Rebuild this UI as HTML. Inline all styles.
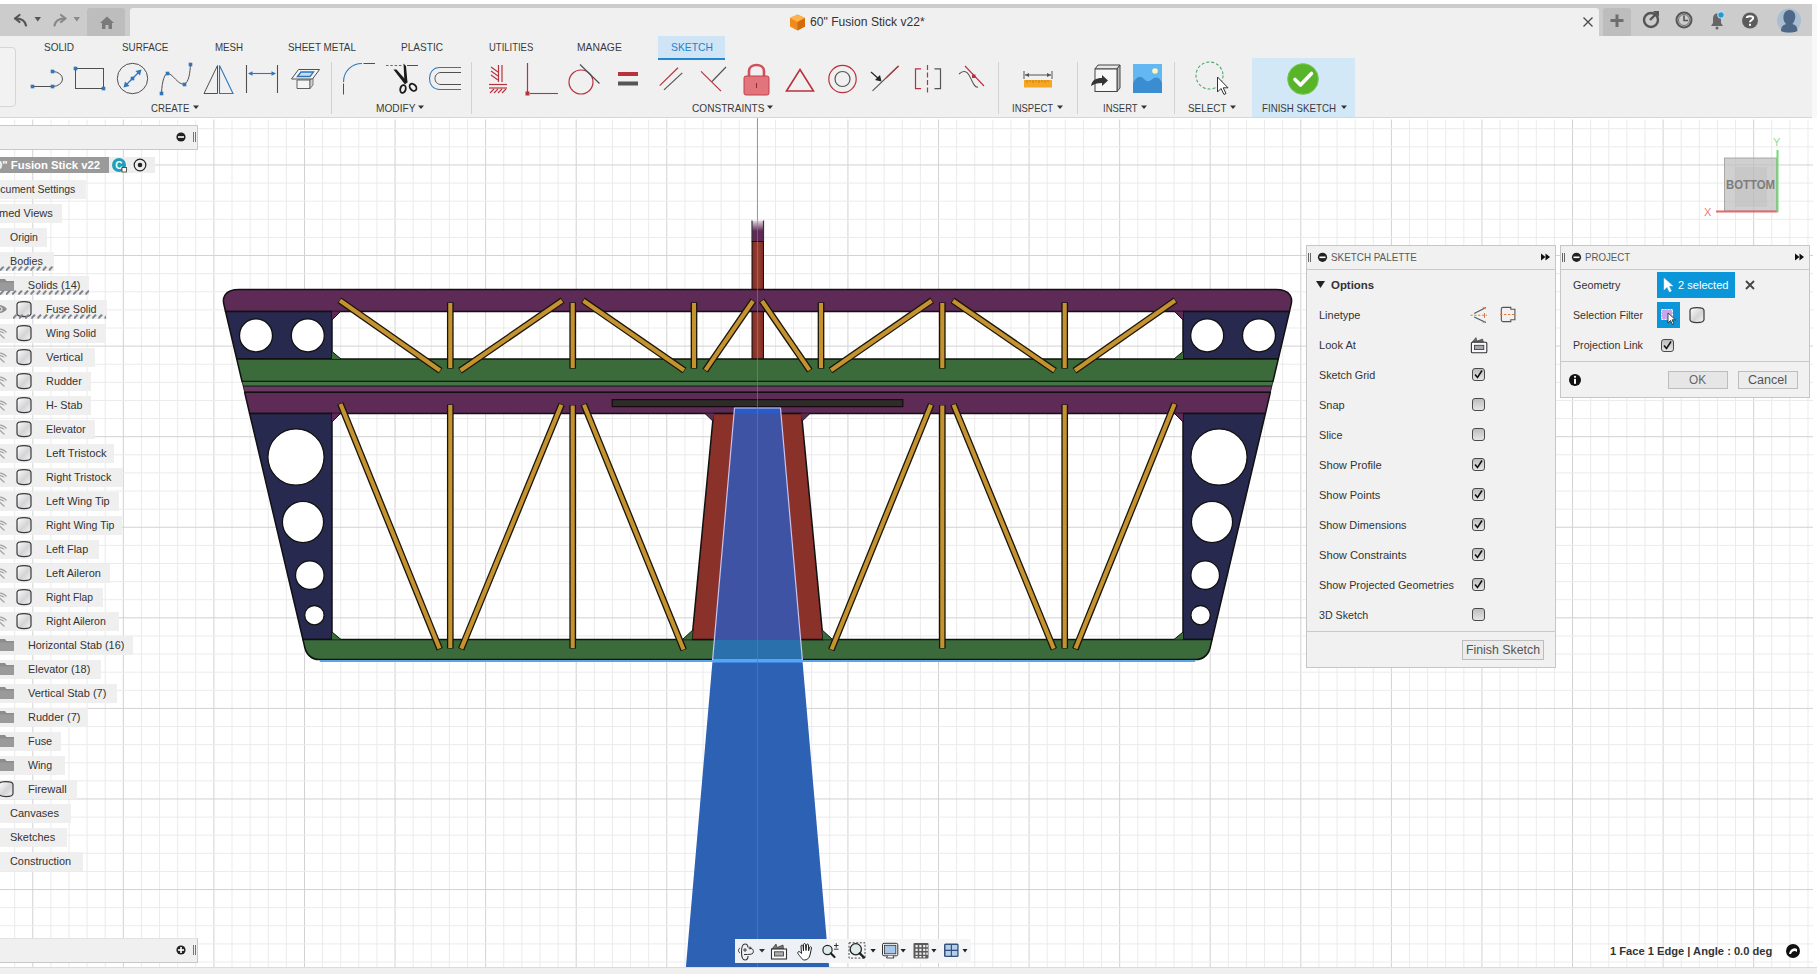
<!DOCTYPE html><html><head><meta charset="utf-8"><style>
*{box-sizing:border-box;margin:0;padding:0}
html,body{width:1817px;height:974px;overflow:hidden;background:#fff;font-family:"Liberation Sans",sans-serif;}
.abs{position:absolute}
.ft{position:absolute;white-space:nowrap;transform-origin:0 0}
.t{position:absolute;white-space:nowrap;color:#3c3c3c;font-size:11px;line-height:13px}
.tab{position:absolute;top:40px;font-size:10.5px;color:#3a3a3a;letter-spacing:-0.2px;line-height:14px;white-space:nowrap}
.grp{position:absolute;top:101px;font-size:10.5px;color:#3a3a3a;letter-spacing:-0.3px;line-height:13px;white-space:nowrap}
.row{position:absolute;height:19px;background:rgba(238,238,238,0.94);}
.rt{position:absolute;font-size:11px;color:#333;white-space:nowrap;line-height:13px}
.cb{position:absolute;width:13px;height:13px;border:1px solid #4a4a4a;border-radius:3px;background:linear-gradient(#bdbdbd,#e6e6e6)}
.pl{position:absolute;font-size:11px;color:#333;white-space:nowrap;line-height:13px}
</style></head><body>

<svg class="abs" style="left:0;top:0" width="1817" height="974" viewBox="0 0 1817 974">
<rect x="0" y="118" width="1817" height="849" fill="#ffffff"/>
<rect x="14.14" y="119.5" width="1" height="847.5" fill="#ebebeb"/><rect x="32.25" y="119.5" width="1" height="847.5" fill="#d2d2d2"/><rect x="50.37" y="119.5" width="1" height="847.5" fill="#ebebeb"/><rect x="68.48" y="119.5" width="1" height="847.5" fill="#ebebeb"/><rect x="86.60" y="119.5" width="1" height="847.5" fill="#ebebeb"/><rect x="104.71" y="119.5" width="1" height="847.5" fill="#ebebeb"/><rect x="122.83" y="119.5" width="1" height="847.5" fill="#d2d2d2"/><rect x="140.94" y="119.5" width="1" height="847.5" fill="#ebebeb"/><rect x="159.06" y="119.5" width="1" height="847.5" fill="#ebebeb"/><rect x="177.17" y="119.5" width="1" height="847.5" fill="#ebebeb"/><rect x="195.28" y="119.5" width="1" height="847.5" fill="#ebebeb"/><rect x="213.40" y="119.5" width="1" height="847.5" fill="#d2d2d2"/><rect x="231.52" y="119.5" width="1" height="847.5" fill="#ebebeb"/><rect x="249.63" y="119.5" width="1" height="847.5" fill="#ebebeb"/><rect x="267.75" y="119.5" width="1" height="847.5" fill="#ebebeb"/><rect x="285.86" y="119.5" width="1" height="847.5" fill="#ebebeb"/><rect x="303.98" y="119.5" width="1" height="847.5" fill="#d2d2d2"/><rect x="322.09" y="119.5" width="1" height="847.5" fill="#ebebeb"/><rect x="340.20" y="119.5" width="1" height="847.5" fill="#ebebeb"/><rect x="358.32" y="119.5" width="1" height="847.5" fill="#ebebeb"/><rect x="376.44" y="119.5" width="1" height="847.5" fill="#ebebeb"/><rect x="394.55" y="119.5" width="1" height="847.5" fill="#d2d2d2"/><rect x="412.66" y="119.5" width="1" height="847.5" fill="#ebebeb"/><rect x="430.78" y="119.5" width="1" height="847.5" fill="#ebebeb"/><rect x="448.89" y="119.5" width="1" height="847.5" fill="#ebebeb"/><rect x="467.01" y="119.5" width="1" height="847.5" fill="#ebebeb"/><rect x="485.12" y="119.5" width="1" height="847.5" fill="#d2d2d2"/><rect x="503.24" y="119.5" width="1" height="847.5" fill="#ebebeb"/><rect x="521.36" y="119.5" width="1" height="847.5" fill="#ebebeb"/><rect x="539.47" y="119.5" width="1" height="847.5" fill="#ebebeb"/><rect x="557.58" y="119.5" width="1" height="847.5" fill="#ebebeb"/><rect x="575.70" y="119.5" width="1" height="847.5" fill="#d2d2d2"/><rect x="593.81" y="119.5" width="1" height="847.5" fill="#ebebeb"/><rect x="611.93" y="119.5" width="1" height="847.5" fill="#ebebeb"/><rect x="630.04" y="119.5" width="1" height="847.5" fill="#ebebeb"/><rect x="648.16" y="119.5" width="1" height="847.5" fill="#ebebeb"/><rect x="666.27" y="119.5" width="1" height="847.5" fill="#d2d2d2"/><rect x="684.39" y="119.5" width="1" height="847.5" fill="#ebebeb"/><rect x="702.50" y="119.5" width="1" height="847.5" fill="#ebebeb"/><rect x="720.62" y="119.5" width="1" height="847.5" fill="#ebebeb"/><rect x="738.73" y="119.5" width="1" height="847.5" fill="#ebebeb"/><rect x="756.85" y="119.5" width="1" height="847.5" fill="#d2d2d2"/><rect x="774.96" y="119.5" width="1" height="847.5" fill="#ebebeb"/><rect x="793.08" y="119.5" width="1" height="847.5" fill="#ebebeb"/><rect x="811.19" y="119.5" width="1" height="847.5" fill="#ebebeb"/><rect x="829.31" y="119.5" width="1" height="847.5" fill="#ebebeb"/><rect x="847.42" y="119.5" width="1" height="847.5" fill="#d2d2d2"/><rect x="865.54" y="119.5" width="1" height="847.5" fill="#ebebeb"/><rect x="883.65" y="119.5" width="1" height="847.5" fill="#ebebeb"/><rect x="901.77" y="119.5" width="1" height="847.5" fill="#ebebeb"/><rect x="919.88" y="119.5" width="1" height="847.5" fill="#ebebeb"/><rect x="938.00" y="119.5" width="1" height="847.5" fill="#d2d2d2"/><rect x="956.11" y="119.5" width="1" height="847.5" fill="#ebebeb"/><rect x="974.23" y="119.5" width="1" height="847.5" fill="#ebebeb"/><rect x="992.34" y="119.5" width="1" height="847.5" fill="#ebebeb"/><rect x="1010.46" y="119.5" width="1" height="847.5" fill="#ebebeb"/><rect x="1028.58" y="119.5" width="1" height="847.5" fill="#d2d2d2"/><rect x="1046.69" y="119.5" width="1" height="847.5" fill="#ebebeb"/><rect x="1064.81" y="119.5" width="1" height="847.5" fill="#ebebeb"/><rect x="1082.92" y="119.5" width="1" height="847.5" fill="#ebebeb"/><rect x="1101.03" y="119.5" width="1" height="847.5" fill="#ebebeb"/><rect x="1119.15" y="119.5" width="1" height="847.5" fill="#d2d2d2"/><rect x="1137.26" y="119.5" width="1" height="847.5" fill="#ebebeb"/><rect x="1155.38" y="119.5" width="1" height="847.5" fill="#ebebeb"/><rect x="1173.49" y="119.5" width="1" height="847.5" fill="#ebebeb"/><rect x="1191.61" y="119.5" width="1" height="847.5" fill="#ebebeb"/><rect x="1209.72" y="119.5" width="1" height="847.5" fill="#d2d2d2"/><rect x="1227.84" y="119.5" width="1" height="847.5" fill="#ebebeb"/><rect x="1245.95" y="119.5" width="1" height="847.5" fill="#ebebeb"/><rect x="1264.07" y="119.5" width="1" height="847.5" fill="#ebebeb"/><rect x="1282.18" y="119.5" width="1" height="847.5" fill="#ebebeb"/><rect x="1300.30" y="119.5" width="1" height="847.5" fill="#d2d2d2"/><rect x="1318.41" y="119.5" width="1" height="847.5" fill="#ebebeb"/><rect x="1336.53" y="119.5" width="1" height="847.5" fill="#ebebeb"/><rect x="1354.64" y="119.5" width="1" height="847.5" fill="#ebebeb"/><rect x="1372.76" y="119.5" width="1" height="847.5" fill="#ebebeb"/><rect x="1390.88" y="119.5" width="1" height="847.5" fill="#d2d2d2"/><rect x="1408.99" y="119.5" width="1" height="847.5" fill="#ebebeb"/><rect x="1427.11" y="119.5" width="1" height="847.5" fill="#ebebeb"/><rect x="1445.22" y="119.5" width="1" height="847.5" fill="#ebebeb"/><rect x="1463.34" y="119.5" width="1" height="847.5" fill="#ebebeb"/><rect x="1481.45" y="119.5" width="1" height="847.5" fill="#d2d2d2"/><rect x="1499.57" y="119.5" width="1" height="847.5" fill="#ebebeb"/><rect x="1517.68" y="119.5" width="1" height="847.5" fill="#ebebeb"/><rect x="1535.80" y="119.5" width="1" height="847.5" fill="#ebebeb"/><rect x="1553.91" y="119.5" width="1" height="847.5" fill="#ebebeb"/><rect x="1572.02" y="119.5" width="1" height="847.5" fill="#d2d2d2"/><rect x="1590.14" y="119.5" width="1" height="847.5" fill="#ebebeb"/><rect x="1608.25" y="119.5" width="1" height="847.5" fill="#ebebeb"/><rect x="1626.37" y="119.5" width="1" height="847.5" fill="#ebebeb"/><rect x="1644.48" y="119.5" width="1" height="847.5" fill="#ebebeb"/><rect x="1662.60" y="119.5" width="1" height="847.5" fill="#d2d2d2"/><rect x="1680.71" y="119.5" width="1" height="847.5" fill="#ebebeb"/><rect x="1698.83" y="119.5" width="1" height="847.5" fill="#ebebeb"/><rect x="1716.94" y="119.5" width="1" height="847.5" fill="#ebebeb"/><rect x="1735.06" y="119.5" width="1" height="847.5" fill="#ebebeb"/><rect x="1753.17" y="119.5" width="1" height="847.5" fill="#d2d2d2"/><rect x="1771.29" y="119.5" width="1" height="847.5" fill="#ebebeb"/><rect x="1789.40" y="119.5" width="1" height="847.5" fill="#ebebeb"/><rect x="1807.52" y="119.5" width="1" height="847.5" fill="#ebebeb"/><rect x="0" y="128.22" width="1813" height="1" fill="#ebebeb"/><rect x="0" y="146.34" width="1813" height="1" fill="#ebebeb"/><rect x="0" y="164.45" width="1813" height="1" fill="#d2d2d2"/><rect x="0" y="182.57" width="1813" height="1" fill="#ebebeb"/><rect x="0" y="200.68" width="1813" height="1" fill="#ebebeb"/><rect x="0" y="218.80" width="1813" height="1" fill="#ebebeb"/><rect x="0" y="236.91" width="1813" height="1" fill="#ebebeb"/><rect x="0" y="255.03" width="1813" height="1" fill="#d2d2d2"/><rect x="0" y="273.14" width="1813" height="1" fill="#ebebeb"/><rect x="0" y="291.25" width="1813" height="1" fill="#ebebeb"/><rect x="0" y="309.37" width="1813" height="1" fill="#ebebeb"/><rect x="0" y="327.49" width="1813" height="1" fill="#ebebeb"/><rect x="0" y="345.60" width="1813" height="1" fill="#d2d2d2"/><rect x="0" y="363.72" width="1813" height="1" fill="#ebebeb"/><rect x="0" y="381.83" width="1813" height="1" fill="#ebebeb"/><rect x="0" y="399.94" width="1813" height="1" fill="#ebebeb"/><rect x="0" y="418.06" width="1813" height="1" fill="#ebebeb"/><rect x="0" y="436.18" width="1813" height="1" fill="#d2d2d2"/><rect x="0" y="454.29" width="1813" height="1" fill="#ebebeb"/><rect x="0" y="472.40" width="1813" height="1" fill="#ebebeb"/><rect x="0" y="490.52" width="1813" height="1" fill="#ebebeb"/><rect x="0" y="508.63" width="1813" height="1" fill="#ebebeb"/><rect x="0" y="526.75" width="1813" height="1" fill="#d2d2d2"/><rect x="0" y="544.87" width="1813" height="1" fill="#ebebeb"/><rect x="0" y="562.98" width="1813" height="1" fill="#ebebeb"/><rect x="0" y="581.10" width="1813" height="1" fill="#ebebeb"/><rect x="0" y="599.21" width="1813" height="1" fill="#ebebeb"/><rect x="0" y="617.33" width="1813" height="1" fill="#d2d2d2"/><rect x="0" y="635.44" width="1813" height="1" fill="#ebebeb"/><rect x="0" y="653.55" width="1813" height="1" fill="#ebebeb"/><rect x="0" y="671.67" width="1813" height="1" fill="#ebebeb"/><rect x="0" y="689.78" width="1813" height="1" fill="#ebebeb"/><rect x="0" y="707.90" width="1813" height="1" fill="#d2d2d2"/><rect x="0" y="726.01" width="1813" height="1" fill="#ebebeb"/><rect x="0" y="744.13" width="1813" height="1" fill="#ebebeb"/><rect x="0" y="762.25" width="1813" height="1" fill="#ebebeb"/><rect x="0" y="780.36" width="1813" height="1" fill="#ebebeb"/><rect x="0" y="798.47" width="1813" height="1" fill="#d2d2d2"/><rect x="0" y="816.59" width="1813" height="1" fill="#ebebeb"/><rect x="0" y="834.70" width="1813" height="1" fill="#ebebeb"/><rect x="0" y="852.82" width="1813" height="1" fill="#ebebeb"/><rect x="0" y="870.93" width="1813" height="1" fill="#ebebeb"/><rect x="0" y="889.05" width="1813" height="1" fill="#d2d2d2"/><rect x="0" y="907.16" width="1813" height="1" fill="#ebebeb"/><rect x="0" y="925.28" width="1813" height="1" fill="#ebebeb"/><rect x="0" y="943.39" width="1813" height="1" fill="#ebebeb"/><rect x="0" y="961.51" width="1813" height="1" fill="#ebebeb"/>
<defs><linearGradient id="postg" x1="0" y1="0" x2="0" y2="1"><stop offset="0" stop-color="#e8dce6"/><stop offset="0.5" stop-color="#5e2a56"/><stop offset="1" stop-color="#5e2a56"/></linearGradient><linearGradient id="redg" x1="0" y1="0" x2="1" y2="0"><stop offset="0" stop-color="#7d2a24"/><stop offset="0.5" stop-color="#9a4035"/><stop offset="1" stop-color="#7d2a24"/></linearGradient></defs>
<rect x="752" y="220.5" width="11.5" height="21" fill="url(#postg)"/>
<path d="M752,220.5 L752,241.5 M763.5,220.5 L763.5,241.5" stroke="#333" stroke-width="1.2"/>
<rect x="752" y="241.5" width="11.5" height="118" fill="url(#redg)" stroke="#111" stroke-width="1"/>
<path d="M 225.53,311.5 L 224.24,306 C 222.04,299 223.34,289.5 239.34,289.5 L 1275.66,289.5 C 1291.66,289.5 1292.96,299 1290.76,306 L 1289.47,311.5 Z" fill="#5e2a56" stroke="#111" stroke-width="1.5"/>
<polygon points="225.53,311.50 332.00,311.50 332.00,359.00 236.74,359.00" fill="#28294f" stroke="#111" stroke-width="1.5" stroke-linejoin="round" />
<polygon points="1289.47,311.50 1183.00,311.50 1183.00,359.00 1278.26,359.00" fill="#28294f" stroke="#111" stroke-width="1.5" stroke-linejoin="round" />
<polygon points="236.74,359.00 1278.26,359.00 1272.95,381.50 242.05,381.50" fill="#3b6b3b" stroke="#111" stroke-width="1.5" stroke-linejoin="round" />
<polygon points="242.05,381.50 1272.95,381.50 1271.84,386.20 243.16,386.20" fill="#457545" stroke="#111" stroke-width="0.8" stroke-linejoin="round" />
<polygon points="243.16,386.20 1271.84,386.20 1270.42,392.20 244.58,392.20" fill="#6b3a63" stroke="#111" stroke-width="0.8" stroke-linejoin="round" />
<polygon points="244.58,392.20 1270.42,392.20 1265.39,413.50 249.61,413.50" fill="#5e2a56" stroke="#111" stroke-width="1.5" stroke-linejoin="round" />
<polygon points="249.61,413.50 332.00,413.50 332.00,639.50 302.94,639.50" fill="#28294f" stroke="#111" stroke-width="1.5" stroke-linejoin="round" />
<polygon points="1265.39,413.50 1183.00,413.50 1183.00,639.50 1212.06,639.50" fill="#28294f" stroke="#111" stroke-width="1.5" stroke-linejoin="round" />
<path d="M 302.94,639.5 L 1212.06,639.5 L 1210.88,644.5 Q 1208.34,659.5 1195.34,659.5 L 319.66,659.5 Q 306.66,659.5 304.12,644.5 Z" fill="#3b6b3b" stroke="#111" stroke-width="1.5"/>
<polygon points="332.00,320.00 332.00,311.50 340.50,311.50" fill="#5e2a56" stroke="none" stroke-width="0" stroke-linejoin="round" />
<polygon points="1183.00,320.00 1183.00,311.50 1174.50,311.50" fill="#5e2a56" stroke="none" stroke-width="0" stroke-linejoin="round" />
<polygon points="332.00,351.50 332.00,359.00 341.00,359.00" fill="#3b6b3b" stroke="none" stroke-width="0" stroke-linejoin="round" />
<polygon points="1183.00,351.50 1183.00,359.00 1174.00,359.00" fill="#3b6b3b" stroke="none" stroke-width="0" stroke-linejoin="round" />
<polygon points="332.00,422.00 332.00,413.50 340.50,413.50" fill="#5e2a56" stroke="none" stroke-width="0" stroke-linejoin="round" />
<polygon points="1183.00,422.00 1183.00,413.50 1174.50,413.50" fill="#5e2a56" stroke="none" stroke-width="0" stroke-linejoin="round" />
<polygon points="332.00,632.00 332.00,639.50 341.00,639.50" fill="#3b6b3b" stroke="none" stroke-width="0" stroke-linejoin="round" />
<polygon points="1183.00,632.00 1183.00,639.50 1174.00,639.50" fill="#3b6b3b" stroke="none" stroke-width="0" stroke-linejoin="round" />
<line x1="332" y1="320" x2="340.5" y2="311.5" stroke="#111" stroke-width="1"/>
<line x1="1183.0" y1="320" x2="1174.5" y2="311.5" stroke="#111" stroke-width="1"/>
<line x1="332" y1="351.5" x2="341" y2="359" stroke="#111" stroke-width="1"/>
<line x1="1183.0" y1="351.5" x2="1174.0" y2="359" stroke="#111" stroke-width="1"/>
<line x1="332" y1="422" x2="340.5" y2="413.5" stroke="#111" stroke-width="1"/>
<line x1="1183.0" y1="422" x2="1174.5" y2="413.5" stroke="#111" stroke-width="1"/>
<line x1="332" y1="632" x2="341" y2="639.5" stroke="#111" stroke-width="1"/>
<line x1="1183.0" y1="632" x2="1174.0" y2="639.5" stroke="#111" stroke-width="1"/>
<circle cx="256.00" cy="335.4" r="16.5" fill="#fff" stroke="#111" stroke-width="1.3"/>
<circle cx="1259.00" cy="335.4" r="16.5" fill="#fff" stroke="#111" stroke-width="1.3"/>
<circle cx="307.80" cy="335.4" r="16.5" fill="#fff" stroke="#111" stroke-width="1.3"/>
<circle cx="1207.20" cy="335.4" r="16.5" fill="#fff" stroke="#111" stroke-width="1.3"/>
<circle cx="296.00" cy="457" r="28.1" fill="#fff" stroke="#111" stroke-width="1.3"/>
<circle cx="1219.00" cy="457" r="28.1" fill="#fff" stroke="#111" stroke-width="1.3"/>
<circle cx="303.00" cy="522" r="20.6" fill="#fff" stroke="#111" stroke-width="1.3"/>
<circle cx="1212.00" cy="522" r="20.6" fill="#fff" stroke="#111" stroke-width="1.3"/>
<circle cx="309.80" cy="575.2" r="14.3" fill="#fff" stroke="#111" stroke-width="1.3"/>
<circle cx="1205.20" cy="575.2" r="14.3" fill="#fff" stroke="#111" stroke-width="1.3"/>
<circle cx="314.40" cy="615.2" r="9.7" fill="#fff" stroke="#111" stroke-width="1.3"/>
<circle cx="1200.60" cy="615.2" r="9.7" fill="#fff" stroke="#111" stroke-width="1.3"/>
<line x1="339.51" y1="300.16" x2="440.49" y2="370.84" stroke="#1a1408" stroke-width="6.699999999999999" stroke-linecap="butt"/><line x1="340.00" y1="300.50" x2="440.00" y2="370.50" stroke="#c49330" stroke-width="4.1" stroke-linecap="butt"/>
<line x1="1175.49" y1="300.16" x2="1074.51" y2="370.84" stroke="#1a1408" stroke-width="6.699999999999999" stroke-linecap="butt"/><line x1="1175.00" y1="300.50" x2="1075.00" y2="370.50" stroke="#c49330" stroke-width="4.1" stroke-linecap="butt"/>
<line x1="450.30" y1="302.40" x2="450.30" y2="368.60" stroke="#1a1408" stroke-width="6.699999999999999" stroke-linecap="butt"/><line x1="450.30" y1="303.00" x2="450.30" y2="368.00" stroke="#c49330" stroke-width="4.1" stroke-linecap="butt"/>
<line x1="1064.70" y1="302.40" x2="1064.70" y2="368.60" stroke="#1a1408" stroke-width="6.699999999999999" stroke-linecap="butt"/><line x1="1064.70" y1="303.00" x2="1064.70" y2="368.00" stroke="#c49330" stroke-width="4.1" stroke-linecap="butt"/>
<line x1="460.01" y1="370.84" x2="562.49" y2="300.36" stroke="#1a1408" stroke-width="6.699999999999999" stroke-linecap="butt"/><line x1="460.50" y1="370.50" x2="562.00" y2="300.70" stroke="#c49330" stroke-width="4.1" stroke-linecap="butt"/>
<line x1="1054.99" y1="370.84" x2="952.51" y2="300.36" stroke="#1a1408" stroke-width="6.699999999999999" stroke-linecap="butt"/><line x1="1054.50" y1="370.50" x2="953.00" y2="300.70" stroke="#c49330" stroke-width="4.1" stroke-linecap="butt"/>
<line x1="572.70" y1="302.40" x2="572.70" y2="368.60" stroke="#1a1408" stroke-width="6.699999999999999" stroke-linecap="butt"/><line x1="572.70" y1="303.00" x2="572.70" y2="368.00" stroke="#c49330" stroke-width="4.1" stroke-linecap="butt"/>
<line x1="942.30" y1="302.40" x2="942.30" y2="368.60" stroke="#1a1408" stroke-width="6.699999999999999" stroke-linecap="butt"/><line x1="942.30" y1="303.00" x2="942.30" y2="368.00" stroke="#c49330" stroke-width="4.1" stroke-linecap="butt"/>
<line x1="582.91" y1="300.36" x2="684.49" y2="370.54" stroke="#1a1408" stroke-width="6.699999999999999" stroke-linecap="butt"/><line x1="583.40" y1="300.70" x2="684.00" y2="370.20" stroke="#c49330" stroke-width="4.1" stroke-linecap="butt"/>
<line x1="932.09" y1="300.36" x2="830.51" y2="370.54" stroke="#1a1408" stroke-width="6.699999999999999" stroke-linecap="butt"/><line x1="931.60" y1="300.70" x2="831.00" y2="370.20" stroke="#c49330" stroke-width="4.1" stroke-linecap="butt"/>
<line x1="694.00" y1="302.40" x2="694.00" y2="368.60" stroke="#1a1408" stroke-width="6.699999999999999" stroke-linecap="butt"/><line x1="694.00" y1="303.00" x2="694.00" y2="368.00" stroke="#c49330" stroke-width="4.1" stroke-linecap="butt"/>
<line x1="821.00" y1="302.40" x2="821.00" y2="368.60" stroke="#1a1408" stroke-width="6.699999999999999" stroke-linecap="butt"/><line x1="821.00" y1="303.00" x2="821.00" y2="368.00" stroke="#c49330" stroke-width="4.1" stroke-linecap="butt"/>
<line x1="705.16" y1="370.69" x2="753.34" y2="300.51" stroke="#1a1408" stroke-width="6.699999999999999" stroke-linecap="butt"/><line x1="705.50" y1="370.20" x2="753.00" y2="301.00" stroke="#c49330" stroke-width="4.1" stroke-linecap="butt"/>
<line x1="809.84" y1="370.69" x2="761.66" y2="300.51" stroke="#1a1408" stroke-width="6.699999999999999" stroke-linecap="butt"/><line x1="809.50" y1="370.20" x2="762.00" y2="301.00" stroke="#c49330" stroke-width="4.1" stroke-linecap="butt"/>
<line x1="340.27" y1="403.44" x2="439.73" y2="649.16" stroke="#1a1408" stroke-width="6.699999999999999" stroke-linecap="butt"/><line x1="340.50" y1="404.00" x2="439.50" y2="648.60" stroke="#c49330" stroke-width="4.1" stroke-linecap="butt"/>
<line x1="1174.73" y1="403.44" x2="1075.27" y2="649.16" stroke="#1a1408" stroke-width="6.699999999999999" stroke-linecap="butt"/><line x1="1174.50" y1="404.00" x2="1075.50" y2="648.60" stroke="#c49330" stroke-width="4.1" stroke-linecap="butt"/>
<line x1="450.30" y1="404.40" x2="450.30" y2="648.60" stroke="#1a1408" stroke-width="6.699999999999999" stroke-linecap="butt"/><line x1="450.30" y1="405.00" x2="450.30" y2="648.00" stroke="#c49330" stroke-width="4.1" stroke-linecap="butt"/>
<line x1="1064.70" y1="404.40" x2="1064.70" y2="648.60" stroke="#1a1408" stroke-width="6.699999999999999" stroke-linecap="butt"/><line x1="1064.70" y1="405.00" x2="1064.70" y2="648.00" stroke="#c49330" stroke-width="4.1" stroke-linecap="butt"/>
<line x1="461.07" y1="649.16" x2="561.63" y2="404.24" stroke="#1a1408" stroke-width="6.699999999999999" stroke-linecap="butt"/><line x1="461.30" y1="648.60" x2="561.40" y2="404.80" stroke="#c49330" stroke-width="4.1" stroke-linecap="butt"/>
<line x1="1053.93" y1="649.16" x2="953.37" y2="404.24" stroke="#1a1408" stroke-width="6.699999999999999" stroke-linecap="butt"/><line x1="1053.70" y1="648.60" x2="953.60" y2="404.80" stroke="#c49330" stroke-width="4.1" stroke-linecap="butt"/>
<line x1="572.70" y1="404.90" x2="572.70" y2="648.60" stroke="#1a1408" stroke-width="6.699999999999999" stroke-linecap="butt"/><line x1="572.70" y1="405.50" x2="572.70" y2="648.00" stroke="#c49330" stroke-width="4.1" stroke-linecap="butt"/>
<line x1="942.30" y1="404.90" x2="942.30" y2="648.60" stroke="#1a1408" stroke-width="6.699999999999999" stroke-linecap="butt"/><line x1="942.30" y1="405.50" x2="942.30" y2="648.00" stroke="#c49330" stroke-width="4.1" stroke-linecap="butt"/>
<line x1="583.77" y1="404.24" x2="683.73" y2="649.96" stroke="#1a1408" stroke-width="6.699999999999999" stroke-linecap="butt"/><line x1="584.00" y1="404.80" x2="683.50" y2="649.40" stroke="#c49330" stroke-width="4.1" stroke-linecap="butt"/>
<line x1="931.23" y1="404.24" x2="831.27" y2="649.96" stroke="#1a1408" stroke-width="6.699999999999999" stroke-linecap="butt"/><line x1="931.00" y1="404.80" x2="831.50" y2="649.40" stroke="#c49330" stroke-width="4.1" stroke-linecap="butt"/>
<rect x="612.2" y="399.6" width="290.60" height="7" fill="#2c2c29" stroke="#180810" stroke-width="1.2"/>
<polygon points="713.50,413.50 801.50,413.50 823.10,639.50 691.90,639.50" fill="#8a3129" stroke="#111" stroke-width="1.5" stroke-linejoin="round" />
<polygon points="705.00,413.50 712.78,421.00 714.50,413.50" fill="#5e2a56" stroke="none" stroke-width="0" stroke-linejoin="round" />
<polygon points="810.00,413.50 802.22,421.00 800.50,413.50" fill="#5e2a56" stroke="none" stroke-width="0" stroke-linejoin="round" />
<line x1="705" y1="413.5" x2="712.78" y2="421" stroke="#111"/><line x1="810.0" y1="413.5" x2="802.22" y2="421" stroke="#111"/>
<polygon points="682.50,639.50 692.81,630.00 691.90,639.50" fill="#3b6b3b" stroke="none" stroke-width="0" stroke-linejoin="round" />
<polygon points="832.50,639.50 822.19,630.00 823.10,639.50" fill="#3b6b3b" stroke="none" stroke-width="0" stroke-linejoin="round" />
<line x1="682.5" y1="639.5" x2="692.81" y2="630" stroke="#111"/><line x1="832.5" y1="639.5" x2="822.19" y2="630" stroke="#111"/>
<defs><clipPath id="bclip"><polygon points="734.50,408 780.50,408 829.08,967 685.92,967"/></clipPath></defs>
<g clip-path="url(#bclip)">
<rect x="600" y="408" width="320" height="6" fill="#2a5cc9"/>
<rect x="600" y="414" width="320" height="226" fill="#3f53a4"/>
<rect x="600" y="640" width="320" height="20" fill="#2a70ad"/>
<rect x="600" y="660" width="320" height="3" fill="#3b86e0"/>
<rect x="600" y="663" width="320" height="304" fill="#2c61b3"/>
</g>
<polygon points="734.50,408 780.50,408 802.40,660 712.60,660" fill="none" stroke="#c9c4f0" stroke-width="1.2"/>
<rect x="319.78" y="660" width="875.44" height="2" fill="#5aa6ea"/>
<rect x="757" y="118" width="1" height="102" fill="#58c858"/>
<rect x="757" y="220" width="1" height="188" fill="#5aa05a" opacity="0.6"/>
<rect x="757" y="408" width="1" height="559" fill="#3a86c8" opacity="0.7"/>
</svg>
<div class="abs" style="left:0;top:0;width:1817px;height:4px;background:#fff"></div>
<div class="abs" style="left:0;top:4px;width:1812px;height:32px;background:#cccccc"></div>
<div class="abs" style="left:1812px;top:4px;width:5px;height:114px;background:#f8f8f8"></div>
<div class="abs" style="left:0;top:36px;width:1812px;height:81px;background:#f0f0f0"></div>
<div class="abs" style="left:0;top:117px;width:1812px;height:1px;background:#d6d6d6"></div>
<div class="abs" style="left:87px;top:8px;width:38px;height:28px;background:#bdbdbd;border-radius:3px 3px 0 0"></div>
<div class="abs" style="left:130px;top:8px;width:1469px;height:28px;background:#f0f0f0;border-radius:3px 3px 0 0"></div>
<div class="abs" style="left:1603px;top:8px;width:28px;height:28px;background:#bdbdbd;border-radius:3px 3px 0 0"></div>
<svg class="abs" style="left:0;top:0" width="140" height="40">
<path d="M26,25.5 C25,20.5 21,18.5 16,18.5" fill="none" stroke="#555" stroke-width="2.2" stroke-linecap="round"/>
<path d="M15,18.5 L19.5,15 M15,18.5 L19.5,22" fill="none" stroke="#555" stroke-width="2.2" stroke-linecap="round"/>
<polygon points="34.5,17 41,17 37.75,21.5" fill="#555"/>
<path d="M54.5,25.5 C55.5,20.5 59.5,18.5 64.5,18.5" fill="none" stroke="#888" stroke-width="2.2" stroke-linecap="round"/>
<path d="M65.5,18.5 L61,15 M65.5,18.5 L61,22" fill="none" stroke="#888" stroke-width="2.2" stroke-linecap="round"/>
<polygon points="73.5,17 80,17 76.75,21.5" fill="#888"/>
<path d="M100,23 L107,16.5 L114,23 L112,23 L112,29 L102,29 L102,23 Z" fill="#7a7a7a"/>
<rect x="105.5" y="25" width="3" height="4" fill="#bdbdbd"/>
</svg>
<svg class="abs" style="left:788px;top:13px" width="20" height="20">
<polygon points="9.5,1.5 17,5 17,13.5 9.5,17.5 2,13.5 2,5" fill="#f08a1c"/>
<polygon points="9.5,1.5 17,5 9.5,9 2,5" fill="#ffb14a"/>
<polygon points="9.5,9 17,5 17,13.5 9.5,17.5" fill="#d26c0c"/>
</svg>
<div class="ft" style="left:810.12px;top:16.12px;font-size:12.5px;line-height:12.5px;font-weight:normal;color:#333;transform:scaleX(0.9694);">60" Fusion Stick v22*</div>
<svg class="abs" style="left:1581.5px;top:16px" width="14" height="14"><path d="M1.5,1.5 L10.5,10.5 M10.5,1.5 L1.5,10.5" stroke="#4a4a4a" stroke-width="1.3"/></svg>
<svg class="abs" style="left:1600px;top:4px" width="217" height="32">
<path d="M17,10.5 L17,23 M10.5,16.5 L23.5,16.5" stroke="#6e6e6e" stroke-width="3"/>
<circle cx="51" cy="16" r="7" fill="none" stroke="#555" stroke-width="2.4"/>
<path d="M50,16 L56,10" stroke="#555" stroke-width="2.4"/>
<polygon points="53,7 59,7 59,13" fill="#555"/>
<circle cx="84" cy="16" r="7.5" fill="none" stroke="#555" stroke-width="2"/>
<circle cx="84" cy="16" r="5.5" fill="none" stroke="#555" stroke-width="0.8"/>
<path d="M84,11.5 L84,16.5 L88,16.5" fill="none" stroke="#555" stroke-width="1.6"/>
<path d="M111,22 L123,22 L121,19 L121,15 C121,11 119,9.5 117,9.5 C115,9.5 113,11 113,15 L113,19 Z" fill="#666"/>
<circle cx="117" cy="24" r="1.5" fill="#666"/>
<circle cx="121" cy="11" r="3.3" fill="#1f9ad6" stroke="#cfe3f0" stroke-width="1"/>
<circle cx="150" cy="16.5" r="8" fill="#5c5c5c"/>
<path d="M146.8,14 C146.8,11.5 153.2,11.5 153.2,14 C153.2,16 150,16 150,18.3" fill="none" stroke="#fff" stroke-width="2"/>
<rect x="149" y="19.8" width="2" height="2" fill="#fff"/>
<circle cx="189" cy="16.5" r="12" fill="#a9bdd3"/>
<path d="M181,27 C181,22 184,21 186,20 C184,18 183,15 183.5,12 C184,8 187,6 189.5,6 C193,6 195.5,9 195.3,13 C195,16 194,18 192.5,20 C195,21 197.5,22 197.5,27 C193,29 185,29 181,27 Z" fill="#4f6787"/>
</svg>
<div class="ft" style="left:44.30px;top:42.19px;font-size:11px;line-height:11px;font-weight:normal;color:#3a3a3a;transform:scaleX(0.9118);">SOLID</div>
<div class="ft" style="left:122.41px;top:42.19px;font-size:11px;line-height:11px;font-weight:normal;color:#3a3a3a;transform:scaleX(0.8926);">SURFACE</div>
<div class="ft" style="left:214.81px;top:42.19px;font-size:11px;line-height:11px;font-weight:normal;color:#3a3a3a;transform:scaleX(0.8835);">MESH</div>
<div class="ft" style="left:288.20px;top:42.19px;font-size:11px;line-height:11px;font-weight:normal;color:#3a3a3a;transform:scaleX(0.9005);">SHEET METAL</div>
<div class="ft" style="left:400.90px;top:42.19px;font-size:11px;line-height:11px;font-weight:normal;color:#3a3a3a;transform:scaleX(0.9160);">PLASTIC</div>
<div class="ft" style="left:489.02px;top:42.19px;font-size:11px;line-height:11px;font-weight:normal;color:#3a3a3a;transform:scaleX(0.8620);">UTILITIES</div>
<div class="ft" style="left:577.09px;top:42.19px;font-size:11px;line-height:11px;font-weight:normal;color:#3a3a3a;transform:scaleX(0.9400);">MANAGE</div>
<div class="abs" style="left:658px;top:36px;width:67px;height:24px;background:#cfe5f5"></div>
<div class="abs" style="left:658px;top:57.5px;width:67px;height:2.5px;background:#1f8ad2"></div>
<div class="ft" style="left:670.69px;top:42.19px;font-size:11px;line-height:11px;font-weight:normal;color:#1d84c8;transform:scaleX(0.9395);">SKETCH</div>
<div class="abs" style="left:-6px;top:47px;width:22px;height:60px;border:1.5px solid #d6d6d6;border-radius:4px;background:#f2f2f2"></div>
<div class="abs" style="left:1252px;top:58px;width:103px;height:59px;background:#d2e8f7"></div>
<div class="ft" style="left:151.31px;top:102.69px;font-size:11px;line-height:11px;font-weight:normal;color:#3a3a3a;transform:scaleX(0.8758);">CREATE</div>
<svg class="abs" style="left:193px;top:104.5px" width="7" height="5"><polygon points="0,0.5 6,0.5 3,4" fill="#333"/></svg>
<div class="ft" style="left:376.09px;top:102.69px;font-size:11px;line-height:11px;font-weight:normal;color:#3a3a3a;transform:scaleX(0.9236);">MODIFY</div>
<svg class="abs" style="left:418.2px;top:104.5px" width="7" height="5"><polygon points="0,0.5 6,0.5 3,4" fill="#333"/></svg>
<div class="ft" style="left:692.00px;top:102.69px;font-size:11px;line-height:11px;font-weight:normal;color:#3a3a3a;transform:scaleX(0.9184);">CONSTRAINTS</div>
<svg class="abs" style="left:767px;top:104.5px" width="7" height="5"><polygon points="0,0.5 6,0.5 3,4" fill="#333"/></svg>
<div class="ft" style="left:1011.82px;top:102.69px;font-size:11px;line-height:11px;font-weight:normal;color:#3a3a3a;transform:scaleX(0.8631);">INSPECT</div>
<svg class="abs" style="left:1057px;top:104.5px" width="7" height="5"><polygon points="0,0.5 6,0.5 3,4" fill="#333"/></svg>
<div class="ft" style="left:1103.12px;top:102.69px;font-size:11px;line-height:11px;font-weight:normal;color:#3a3a3a;transform:scaleX(0.8635);">INSERT</div>
<svg class="abs" style="left:1141px;top:104.5px" width="7" height="5"><polygon points="0,0.5 6,0.5 3,4" fill="#333"/></svg>
<div class="ft" style="left:1187.90px;top:102.69px;font-size:11px;line-height:11px;font-weight:normal;color:#3a3a3a;transform:scaleX(0.8994);">SELECT</div>
<svg class="abs" style="left:1230px;top:104.5px" width="7" height="5"><polygon points="0,0.5 6,0.5 3,4" fill="#333"/></svg>
<div class="ft" style="left:1261.91px;top:102.69px;font-size:11px;line-height:11px;font-weight:normal;color:#3a3a3a;transform:scaleX(0.8835);">FINISH SKETCH</div>
<svg class="abs" style="left:1341px;top:104.5px" width="7" height="5"><polygon points="0,0.5 6,0.5 3,4" fill="#333"/></svg>
<div class="abs" style="left:331px;top:62px;width:1px;height:52px;background:#d2d2d2"></div>
<div class="abs" style="left:471px;top:62px;width:1px;height:52px;background:#d2d2d2"></div>
<div class="abs" style="left:998px;top:62px;width:1px;height:52px;background:#d2d2d2"></div>
<div class="abs" style="left:1077px;top:62px;width:1px;height:52px;background:#d2d2d2"></div>
<div class="abs" style="left:1174px;top:62px;width:1px;height:52px;background:#d2d2d2"></div>
<svg class="abs" style="left:0;top:0" width="1400" height="118">
<!-- line -->
<line x1="32.5" y1="86.5" x2="52.5" y2="86.5" stroke="#505050" stroke-width="1"/>
<path d="M52.5,71.5 A10,7.5 0 0 1 52.5,86.5" fill="none" stroke="#505050" stroke-width="1"/>
<rect x="30.7" y="84.7" width="3.6" height="3.6" fill="#3176bb"/><rect x="50.7" y="84.7" width="3.6" height="3.6" fill="#3176bb"/><rect x="50.7" y="69.7" width="3.6" height="3.6" fill="#3176bb"/>
<!-- rectangle -->
<rect x="75.5" y="68.5" width="28" height="20" fill="none" stroke="#505050" stroke-width="1"/>
<rect x="73.7" y="66.7" width="3.6" height="3.6" fill="#3176bb"/><rect x="101.7" y="86.7" width="3.6" height="3.6" fill="#3176bb"/>
<!-- circle -->
<circle cx="132.5" cy="78.5" r="15.2" fill="none" stroke="#505050" stroke-width="1"/>
<line x1="124.5" y1="86.5" x2="140.5" y2="70.5" stroke="#3176bb" stroke-width="1.2"/>
<polygon points="141.5,69.5 135.5,71 140,75.5" fill="#3176bb"/><polygon points="123.5,87.5 129.5,86 125,81.5" fill="#3176bb"/>
<rect x="130.7" y="76.7" width="3.6" height="3.6" fill="#3176bb"/>
<!-- spline -->
<path d="M161.5,93.5 C162,80 165,73 168,73.5 C173,74 178,85 184,84 C189,83 190,72 190.5,64.5" fill="none" stroke="#505050" stroke-width="1"/>
<rect x="159.7" y="91.7" width="3.6" height="3.6" fill="#3176bb"/><rect x="165.7" y="71.7" width="3.6" height="3.6" fill="#3176bb"/><rect x="182.7" y="82.7" width="3.6" height="3.6" fill="#3176bb"/><rect x="188.7" y="62.7" width="3.6" height="3.6" fill="#3176bb"/>
<!-- mirror -->
<polygon points="204,93.5 217.5,65.5 217.5,93.5" fill="none" stroke="#505050" stroke-width="1"/>
<polygon points="219.5,93.5 219.5,65.5 233,93.5" fill="none" stroke="#3176bb" stroke-width="1.1"/>
<!-- dimension -->
<line x1="246.5" y1="65" x2="246.5" y2="93" stroke="#505050" stroke-width="1.1"/><line x1="277.5" y1="65" x2="277.5" y2="93" stroke="#505050" stroke-width="1.1"/>
<line x1="249" y1="73.5" x2="275" y2="73.5" stroke="#3176bb" stroke-width="1.1"/>
<polygon points="248,73.5 252.5,71.3 252.5,75.7" fill="#3176bb"/><polygon points="276,73.5 271.5,71.3 271.5,75.7" fill="#3176bb"/>
<!-- project -->
<polygon points="297,80 310,80 310,88.5 297,88.5" fill="#f4f4f4" stroke="#505050" stroke-width="0.9"/>
<polygon points="310,80 313,76.5 313,85 310,88.5" fill="#cfcfcf" stroke="#505050" stroke-width="0.7"/>
<polygon points="291.5,79 298.5,69.5 319.5,69.5 312.5,79" fill="#f4f4f4" stroke="#505050" stroke-width="1"/>
<polygon points="297.5,76.5 301,72 313.5,72 310,76.5" fill="#bfe0f7" stroke="#3176bb" stroke-width="1.3"/>
<!-- fillet -->
<path d="M343.5,82 C343.5,71 352,63.5 362,63.5" fill="none" stroke="#3176bb" stroke-width="1.1"/>
<line x1="343.5" y1="83.5" x2="343.5" y2="94.5" stroke="#505050" stroke-width="1"/>
<line x1="363.5" y1="63.5" x2="375" y2="63.5" stroke="#505050" stroke-width="1"/>
<!-- trim -->
<line x1="386" y1="65.5" x2="403" y2="65.5" stroke="#3176bb" stroke-width="1" stroke-dasharray="2.5,1.8"/>
<line x1="407" y1="65.5" x2="418" y2="65.5" stroke="#505050" stroke-width="1"/>
<polygon points="403.5,63.5 406,66 407.5,82.5 404.5,83 " fill="#1a1a1a"/>
<polygon points="393.5,69.5 396.5,69.5 407.5,82 405,84.5" fill="#1a1a1a"/>
<ellipse cx="403" cy="89" rx="2.7" ry="4" fill="none" stroke="#1a1a1a" stroke-width="1.8" transform="rotate(12 403 89)"/>
<ellipse cx="413" cy="87.3" rx="2.9" ry="4" fill="none" stroke="#1a1a1a" stroke-width="1.8" transform="rotate(-40 413 87.3)"/>
<!-- offset -->
<path d="M461,67.5 L440,67.5 C433,67.5 429.5,72.5 429.5,78.5 C429.5,84.5 433,89.5 440,89.5 L461,89.5" fill="none" stroke="#3176bb" stroke-width="1.1"/>
<path d="M461,72.5 L441,72.5 C437.5,72.5 435,75 435,78.5 C435,82 437.5,84.5 441,84.5 L461,84.5" fill="none" stroke="#505050" stroke-width="1"/>
<!-- horiz/vert constraint -->
<line x1="498.5" y1="65" x2="498.5" y2="82" stroke="#b8313d" stroke-width="1.2"/><line x1="502" y1="65" x2="502" y2="82" stroke="#b8313d" stroke-width="1.2"/>
<path d="M491,67 L498,72 M491,71 L498,76 M491,75 L498,80" stroke="#b8313d" stroke-width="1.1"/>
<line x1="489" y1="84.5" x2="507" y2="84.5" stroke="#b8313d" stroke-width="1.2"/><line x1="489" y1="88" x2="507" y2="88" stroke="#b8313d" stroke-width="1.2"/>
<path d="M490,93 L494,89 M494,93 L498,89 M498,93 L502,89 M502,93 L506,89" stroke="#b8313d" stroke-width="1.1"/>
<!-- coincident -->
<line x1="527.5" y1="63" x2="527.5" y2="92" stroke="#b8313d" stroke-width="1.2"/><line x1="530" y1="93.5" x2="558" y2="93.5" stroke="#b8313d" stroke-width="1.1" />
<rect x="525.5" y="91.5" width="4" height="4" fill="#b8313d"/>
<!-- tangent -->
<circle cx="581" cy="82" r="12" fill="none" stroke="#b8313d" stroke-width="1.2"/>
<line x1="580" y1="64.5" x2="599.5" y2="83.5" stroke="#505050" stroke-width="1.2"/>
<!-- equal -->
<rect x="618" y="72" width="20" height="4" fill="#b8313d"/><rect x="618" y="81.5" width="20" height="4" fill="#555"/>
<!-- parallel -->
<line x1="659.7" y1="85.6" x2="678" y2="67.8" stroke="#b8313d" stroke-width="1.2"/><line x1="664" y1="89.9" x2="682.3" y2="72.9" stroke="#555" stroke-width="1.2"/>
<!-- perpendicular -->
<line x1="701" y1="71.4" x2="721" y2="91.1" stroke="#b8313d" stroke-width="1.2"/><line x1="712" y1="81.5" x2="726" y2="67" stroke="#555" stroke-width="1.2"/>
<!-- lock -->
<path d="M749,76.5 L749,71 C749,63 764,63 764,71 L764,76.5" fill="none" stroke="#d0505a" stroke-width="2.6"/>
<rect x="744" y="76" width="25" height="19" rx="2" fill="#e2747b" stroke="#c6404a" stroke-width="1"/>
<line x1="756.5" y1="83" x2="756.5" y2="88" stroke="#8a2a30" stroke-width="1"/>
<!-- triangle -->
<polygon points="786.5,91 800,69.5 813.5,91" fill="none" stroke="#b8313d" stroke-width="1.6"/>
<!-- concentric -->
<circle cx="842.5" cy="79" r="13.7" fill="none" stroke="#b8313d" stroke-width="1.2"/><circle cx="842.5" cy="79" r="7.5" fill="none" stroke="#555" stroke-width="1.2"/>
<!-- midpoint -->
<line x1="872.5" y1="90.8" x2="898.5" y2="66" stroke="#555" stroke-width="1.1"/>
<line x1="886" y1="78" x2="898.5" y2="66" stroke="#b8313d" stroke-width="1.1"/>
<path d="M871,72 L880,80" stroke="#222" stroke-width="1.2"/><polygon points="881.5,81.5 875,80 880,75" fill="#222"/>
<!-- symmetry -->
<path d="M921,68.8 L915.5,68.8 L915.5,88.6 L921,88.6" fill="none" stroke="#b8313d" stroke-width="1.2"/>
<path d="M934.5,68.8 L940.5,68.8 L940.5,88.6 L934.5,88.6" fill="none" stroke="#555" stroke-width="1.2"/>
<line x1="927.5" y1="65" x2="927.5" y2="92.5" stroke="#b8313d" stroke-width="1.2" stroke-dasharray="5,2.5"/>
<!-- curvature -->
<path d="M959,74 C963,70 967,71 969,75 C972,80 974,88 978,87" fill="none" stroke="#555" stroke-width="1.1"/>
<line x1="965" y1="66" x2="984" y2="86" stroke="#b8313d" stroke-width="1.1"/><rect x="972" y="74.5" width="3.5" height="3.5" fill="#b8313d"/>
<!-- inspect ruler -->
<line x1="1024" y1="71" x2="1024" y2="79" stroke="#555" stroke-width="1"/><line x1="1052" y1="71" x2="1052" y2="79" stroke="#555" stroke-width="1"/>
<line x1="1025" y1="75" x2="1051" y2="75" stroke="#555" stroke-width="1"/>
<polygon points="1025,75 1029,73 1029,77" fill="#555"/><polygon points="1051,75 1047,73 1047,77" fill="#555"/>
<rect x="1024" y="80" width="28" height="7.5" fill="#f5a623"/>
<path d="M1027,80 L1027,83 M1030,80 L1030,82 M1033,80 L1033,83 M1036,80 L1036,82 M1039,80 L1039,83 M1042,80 L1042,82 M1045,80 L1045,83 M1048,80 L1048,82" stroke="#b56d00" stroke-width="0.7"/>
<!-- insert box -->
<polygon points="1095,69 1098,65 1120,65 1117,69" fill="#e8e8e8" stroke="#444" stroke-width="1"/>
<polygon points="1117,69 1120,65 1120,88 1117,91.5" fill="#bdbdbd" stroke="#444" stroke-width="1"/>
<rect x="1095" y="69" width="22" height="22.5" fill="#f7f7f7" stroke="#444" stroke-width="1"/>
<path d="M1091,86 C1092,80 1096,78 1102,78 L1102,75 L1108,80.5 L1102,86 L1102,83 C1097,83 1094,84 1091,86 Z" fill="#333"/>
<!-- insert image -->
<rect x="1133" y="64" width="29" height="29" fill="#63b7f2"/>
<path d="M1133,93 L1133,83 C1137,76 1140,75 1144,79 C1148,83 1150,81 1154,78 C1158,76 1161,80 1162,83 L1162,93 Z" fill="#3a8dd0"/>
<circle cx="1155" cy="71" r="2.8" fill="#fff6b0"/>
<!-- select -->
<circle cx="1209.5" cy="75.5" r="13.5" fill="none" stroke="#4aa86a" stroke-width="1.1" stroke-dasharray="3,2"/>
<path d="M1217.5,77 L1217.5,92 L1221,88.5 L1224,94.5 L1226,93.5 L1223.2,87.8 L1228,87.8 Z" fill="#fff" stroke="#333" stroke-width="1"/>
<!-- finish sketch -->
<circle cx="1303" cy="79" r="15.5" fill="#58b52a"/>
<circle cx="1303" cy="79" r="15.3" fill="none" stroke="#7ccb55" stroke-width="0.8"/>
<path d="M1295,79.5 L1300.5,85 L1311.5,73.5" fill="none" stroke="#fff" stroke-width="3.6" stroke-linecap="round" stroke-linejoin="round"/>
</svg>
<div class="abs" style="left:-1px;top:125px;width:199px;height:25px;background:#f0f0f0;border:1px solid #c8c8c8"></div>
<svg class="abs" style="left:170px;top:128px" width="30" height="20">
<circle cx="11" cy="9" r="4.6" fill="#222"/><rect x="8" y="8.2" width="6" height="1.6" fill="#fff"/>
<line x1="23.5" y1="4" x2="23.5" y2="14" stroke="#555" stroke-width="0.8"/><line x1="25.5" y1="4" x2="25.5" y2="14" stroke="#555" stroke-width="0.8"/>
</svg>
<div class="abs" style="left:0;top:157px;width:155px;height:16px;background:rgba(236,236,236,0.9)"></div>
<div class="abs" style="left:0;top:157px;width:109px;height:16px;background:#9a9a9a"></div>
<div class="ft" style="left:-3.95px;top:159.69px;font-size:11px;line-height:11px;font-weight:bold;color:#fff;transform:scaleX(1.0287);">0" Fusion Stick v22</div>
<svg class="abs" style="left:108px;top:156px" width="46" height="18">
<circle cx="11" cy="9" r="7" fill="#1fa0b8"/><text x="7.3" y="12.6" font-family="Liberation Sans" font-weight="bold" font-size="10" fill="#fff">C</text>
<rect x="14" y="11.5" width="4.5" height="4.5" fill="#fff" stroke="#333" stroke-width="0.8"/>
<circle cx="32" cy="9" r="5.8" fill="none" stroke="#222" stroke-width="1.2"/><circle cx="32" cy="9" r="2.3" fill="#222"/>
</svg>
<div class="row" style="left:0;top:179.5px;width:86px"></div>
<div class="ft" style="left:-13.27px;top:183.69px;font-size:11px;line-height:11px;font-weight:normal;color:#333;transform:scaleX(0.9500);">Document Settings</div>
<div class="row" style="left:0;top:203.5px;width:62px"></div>
<div class="ft" style="left:-0.94px;top:207.69px;font-size:11px;line-height:11px;font-weight:normal;color:#333;transform:scaleX(1.0032);">med Views</div>
<div class="row" style="left:0;top:227.5px;width:47px"></div>
<div class="ft" style="left:10.08px;top:231.69px;font-size:11px;line-height:11px;font-weight:normal;color:#333;transform:scaleX(0.9521);">Origin</div>
<div class="row" style="left:0;top:251.5px;width:54px"></div>
<div class="ft" style="left:10.07px;top:255.69px;font-size:11px;line-height:11px;font-weight:normal;color:#333;transform:scaleX(0.9768);">Bodies</div>
<div class="row" style="left:0;top:275.5px;width:89px"></div>
<svg class="abs" style="left:0px;top:278px" width="16" height="14"><path d="M0,1 L5,1 L6.5,3 L14,3 L14,13 L0,13 Z" fill="#8c8c8c"/><rect x="0" y="4.5" width="14" height="8.5" fill="#9a9a9a"/></svg>
<div class="ft" style="left:27.86px;top:279.69px;font-size:11px;line-height:11px;font-weight:normal;color:#333;transform:scaleX(1.0000);">Solids (14)</div>
<svg class="abs" style="left:0px;top:264.5px" width="54" height="6"><defs><pattern id="dp267.5" width="6.1" height="6" patternUnits="userSpaceOnUse"><path d="M0,5.5 L3.6,1.6" stroke="#7a8089" stroke-width="2"/></pattern></defs><rect x="0" y="0" width="54" height="6" fill="url(#dp267.5)"/></svg>
<svg class="abs" style="left:0px;top:288.5px" width="89" height="6"><defs><pattern id="dp291.5" width="6.1" height="6" patternUnits="userSpaceOnUse"><path d="M0,5.5 L3.6,1.6" stroke="#7a8089" stroke-width="2"/></pattern></defs><rect x="0" y="0" width="89" height="6" fill="url(#dp291.5)"/></svg>
<div class="row" style="left:0;top:299.5px;width:106.5px"></div>
<svg class="abs" style="left:-10px;top:302px" width="20" height="14"><path d="M1,7 C5,1.5 13,1.5 17,7 C13,12.5 5,12.5 1,7 Z" fill="#8e8e8e"/><circle cx="10" cy="7" r="2.6" fill="#d6d6d6"/><circle cx="10" cy="7" r="1.2" fill="#8e8e8e"/></svg>
<svg class="abs" style="left:16px;top:300.5px" width="17" height="17"><defs><linearGradient id="bg16_309" x1="0" y1="0" x2="1" y2="1"><stop offset="0" stop-color="#ffffff"/><stop offset="0.55" stop-color="#d4d4d6"/><stop offset="1" stop-color="#f4f4f6"/></linearGradient></defs><path d="M1,3.5 Q1,0.7 8,0.7 Q15,0.7 15,3.5 L15,12.5 Q15,15.6 8,15.6 Q1,15.6 1,12.5 Z" fill="url(#bg16_309)" stroke="#3a3a3a" stroke-width="1.2"/></svg>
<div class="ft" style="left:45.87px;top:303.69px;font-size:11px;line-height:11px;font-weight:normal;color:#333;transform:scaleX(0.9725);">Fuse Solid</div>
<div class="row" style="left:0;top:323.5px;width:106px"></div>
<svg class="abs" style="left:-10px;top:326px" width="20" height="14"><path d="M3,6 C6,2 13,2 16.5,6.5" fill="none" stroke="#a6a6a6" stroke-width="1.3"/><path d="M6,7.5 C8,5 12,5 14,7.5" fill="none" stroke="#a6a6a6" stroke-width="1.1"/><line x1="8" y1="6.5" x2="14.5" y2="12.5" stroke="#a6a6a6" stroke-width="1.2"/></svg>
<svg class="abs" style="left:16px;top:324.5px" width="17" height="17"><defs><linearGradient id="bg16_333" x1="0" y1="0" x2="1" y2="1"><stop offset="0" stop-color="#ffffff"/><stop offset="0.55" stop-color="#d4d4d6"/><stop offset="1" stop-color="#f4f4f6"/></linearGradient></defs><path d="M1,3.5 Q1,0.7 8,0.7 Q15,0.7 15,3.5 L15,12.5 Q15,15.6 8,15.6 Q1,15.6 1,12.5 Z" fill="url(#bg16_333)" stroke="#3a3a3a" stroke-width="1.2"/></svg>
<div class="ft" style="left:45.88px;top:327.69px;font-size:11px;line-height:11px;font-weight:normal;color:#333;transform:scaleX(0.9536);">Wing Solid</div>
<div class="row" style="left:0;top:347.5px;width:95px"></div>
<svg class="abs" style="left:-10px;top:350px" width="20" height="14"><path d="M3,6 C6,2 13,2 16.5,6.5" fill="none" stroke="#a6a6a6" stroke-width="1.3"/><path d="M6,7.5 C8,5 12,5 14,7.5" fill="none" stroke="#a6a6a6" stroke-width="1.1"/><line x1="8" y1="6.5" x2="14.5" y2="12.5" stroke="#a6a6a6" stroke-width="1.2"/></svg>
<svg class="abs" style="left:16px;top:348.5px" width="17" height="17"><defs><linearGradient id="bg16_357" x1="0" y1="0" x2="1" y2="1"><stop offset="0" stop-color="#ffffff"/><stop offset="0.55" stop-color="#d4d4d6"/><stop offset="1" stop-color="#f4f4f6"/></linearGradient></defs><path d="M1,3.5 Q1,0.7 8,0.7 Q15,0.7 15,3.5 L15,12.5 Q15,15.6 8,15.6 Q1,15.6 1,12.5 Z" fill="url(#bg16_357)" stroke="#3a3a3a" stroke-width="1.2"/></svg>
<div class="ft" style="left:45.85px;top:351.69px;font-size:11px;line-height:11px;font-weight:normal;color:#333;transform:scaleX(1.0256);">Vertical</div>
<div class="row" style="left:0;top:371.5px;width:91px"></div>
<svg class="abs" style="left:-10px;top:374px" width="20" height="14"><path d="M3,6 C6,2 13,2 16.5,6.5" fill="none" stroke="#a6a6a6" stroke-width="1.3"/><path d="M6,7.5 C8,5 12,5 14,7.5" fill="none" stroke="#a6a6a6" stroke-width="1.1"/><line x1="8" y1="6.5" x2="14.5" y2="12.5" stroke="#a6a6a6" stroke-width="1.2"/></svg>
<svg class="abs" style="left:16px;top:372.5px" width="17" height="17"><defs><linearGradient id="bg16_381" x1="0" y1="0" x2="1" y2="1"><stop offset="0" stop-color="#ffffff"/><stop offset="0.55" stop-color="#d4d4d6"/><stop offset="1" stop-color="#f4f4f6"/></linearGradient></defs><path d="M1,3.5 Q1,0.7 8,0.7 Q15,0.7 15,3.5 L15,12.5 Q15,15.6 8,15.6 Q1,15.6 1,12.5 Z" fill="url(#bg16_381)" stroke="#3a3a3a" stroke-width="1.2"/></svg>
<div class="ft" style="left:45.86px;top:375.69px;font-size:11px;line-height:11px;font-weight:normal;color:#333;transform:scaleX(0.9915);">Rudder</div>
<div class="row" style="left:0;top:395.5px;width:91px"></div>
<svg class="abs" style="left:-10px;top:398px" width="20" height="14"><path d="M3,6 C6,2 13,2 16.5,6.5" fill="none" stroke="#a6a6a6" stroke-width="1.3"/><path d="M6,7.5 C8,5 12,5 14,7.5" fill="none" stroke="#a6a6a6" stroke-width="1.1"/><line x1="8" y1="6.5" x2="14.5" y2="12.5" stroke="#a6a6a6" stroke-width="1.2"/></svg>
<svg class="abs" style="left:16px;top:396.5px" width="17" height="17"><defs><linearGradient id="bg16_405" x1="0" y1="0" x2="1" y2="1"><stop offset="0" stop-color="#ffffff"/><stop offset="0.55" stop-color="#d4d4d6"/><stop offset="1" stop-color="#f4f4f6"/></linearGradient></defs><path d="M1,3.5 Q1,0.7 8,0.7 Q15,0.7 15,3.5 L15,12.5 Q15,15.6 8,15.6 Q1,15.6 1,12.5 Z" fill="url(#bg16_405)" stroke="#3a3a3a" stroke-width="1.2"/></svg>
<div class="ft" style="left:45.87px;top:399.69px;font-size:11px;line-height:11px;font-weight:normal;color:#333;transform:scaleX(0.9803);">H- Stab</div>
<div class="row" style="left:0;top:419.5px;width:95px"></div>
<svg class="abs" style="left:-10px;top:422px" width="20" height="14"><path d="M3,6 C6,2 13,2 16.5,6.5" fill="none" stroke="#a6a6a6" stroke-width="1.3"/><path d="M6,7.5 C8,5 12,5 14,7.5" fill="none" stroke="#a6a6a6" stroke-width="1.1"/><line x1="8" y1="6.5" x2="14.5" y2="12.5" stroke="#a6a6a6" stroke-width="1.2"/></svg>
<svg class="abs" style="left:16px;top:420.5px" width="17" height="17"><defs><linearGradient id="bg16_429" x1="0" y1="0" x2="1" y2="1"><stop offset="0" stop-color="#ffffff"/><stop offset="0.55" stop-color="#d4d4d6"/><stop offset="1" stop-color="#f4f4f6"/></linearGradient></defs><path d="M1,3.5 Q1,0.7 8,0.7 Q15,0.7 15,3.5 L15,12.5 Q15,15.6 8,15.6 Q1,15.6 1,12.5 Z" fill="url(#bg16_429)" stroke="#3a3a3a" stroke-width="1.2"/></svg>
<div class="ft" style="left:45.87px;top:423.69px;font-size:11px;line-height:11px;font-weight:normal;color:#333;transform:scaleX(0.9803);">Elevator</div>
<div class="row" style="left:0;top:443.5px;width:114.3px"></div>
<svg class="abs" style="left:-10px;top:446px" width="20" height="14"><path d="M3,6 C6,2 13,2 16.5,6.5" fill="none" stroke="#a6a6a6" stroke-width="1.3"/><path d="M6,7.5 C8,5 12,5 14,7.5" fill="none" stroke="#a6a6a6" stroke-width="1.1"/><line x1="8" y1="6.5" x2="14.5" y2="12.5" stroke="#a6a6a6" stroke-width="1.2"/></svg>
<svg class="abs" style="left:16px;top:444.5px" width="17" height="17"><defs><linearGradient id="bg16_453" x1="0" y1="0" x2="1" y2="1"><stop offset="0" stop-color="#ffffff"/><stop offset="0.55" stop-color="#d4d4d6"/><stop offset="1" stop-color="#f4f4f6"/></linearGradient></defs><path d="M1,3.5 Q1,0.7 8,0.7 Q15,0.7 15,3.5 L15,12.5 Q15,15.6 8,15.6 Q1,15.6 1,12.5 Z" fill="url(#bg16_453)" stroke="#3a3a3a" stroke-width="1.2"/></svg>
<div class="ft" style="left:45.85px;top:447.69px;font-size:11px;line-height:11px;font-weight:normal;color:#333;transform:scaleX(1.0237);">Left Tristock</div>
<div class="row" style="left:0;top:467.5px;width:123px"></div>
<svg class="abs" style="left:-10px;top:470px" width="20" height="14"><path d="M3,6 C6,2 13,2 16.5,6.5" fill="none" stroke="#a6a6a6" stroke-width="1.3"/><path d="M6,7.5 C8,5 12,5 14,7.5" fill="none" stroke="#a6a6a6" stroke-width="1.1"/><line x1="8" y1="6.5" x2="14.5" y2="12.5" stroke="#a6a6a6" stroke-width="1.2"/></svg>
<svg class="abs" style="left:16px;top:468.5px" width="17" height="17"><defs><linearGradient id="bg16_477" x1="0" y1="0" x2="1" y2="1"><stop offset="0" stop-color="#ffffff"/><stop offset="0.55" stop-color="#d4d4d6"/><stop offset="1" stop-color="#f4f4f6"/></linearGradient></defs><path d="M1,3.5 Q1,0.7 8,0.7 Q15,0.7 15,3.5 L15,12.5 Q15,15.6 8,15.6 Q1,15.6 1,12.5 Z" fill="url(#bg16_477)" stroke="#3a3a3a" stroke-width="1.2"/></svg>
<div class="ft" style="left:45.87px;top:471.69px;font-size:11px;line-height:11px;font-weight:normal;color:#333;transform:scaleX(0.9808);">Right Tristock</div>
<div class="row" style="left:0;top:491.5px;width:118.7px"></div>
<svg class="abs" style="left:-10px;top:494px" width="20" height="14"><path d="M3,6 C6,2 13,2 16.5,6.5" fill="none" stroke="#a6a6a6" stroke-width="1.3"/><path d="M6,7.5 C8,5 12,5 14,7.5" fill="none" stroke="#a6a6a6" stroke-width="1.1"/><line x1="8" y1="6.5" x2="14.5" y2="12.5" stroke="#a6a6a6" stroke-width="1.2"/></svg>
<svg class="abs" style="left:16px;top:492.5px" width="17" height="17"><defs><linearGradient id="bg16_501" x1="0" y1="0" x2="1" y2="1"><stop offset="0" stop-color="#ffffff"/><stop offset="0.55" stop-color="#d4d4d6"/><stop offset="1" stop-color="#f4f4f6"/></linearGradient></defs><path d="M1,3.5 Q1,0.7 8,0.7 Q15,0.7 15,3.5 L15,12.5 Q15,15.6 8,15.6 Q1,15.6 1,12.5 Z" fill="url(#bg16_501)" stroke="#3a3a3a" stroke-width="1.2"/></svg>
<div class="ft" style="left:45.86px;top:495.69px;font-size:11px;line-height:11px;font-weight:normal;color:#333;transform:scaleX(0.9917);">Left Wing Tip</div>
<div class="row" style="left:0;top:515.5px;width:122.2px"></div>
<svg class="abs" style="left:-10px;top:518px" width="20" height="14"><path d="M3,6 C6,2 13,2 16.5,6.5" fill="none" stroke="#a6a6a6" stroke-width="1.3"/><path d="M6,7.5 C8,5 12,5 14,7.5" fill="none" stroke="#a6a6a6" stroke-width="1.1"/><line x1="8" y1="6.5" x2="14.5" y2="12.5" stroke="#a6a6a6" stroke-width="1.2"/></svg>
<svg class="abs" style="left:16px;top:516.5px" width="17" height="17"><defs><linearGradient id="bg16_525" x1="0" y1="0" x2="1" y2="1"><stop offset="0" stop-color="#ffffff"/><stop offset="0.55" stop-color="#d4d4d6"/><stop offset="1" stop-color="#f4f4f6"/></linearGradient></defs><path d="M1,3.5 Q1,0.7 8,0.7 Q15,0.7 15,3.5 L15,12.5 Q15,15.6 8,15.6 Q1,15.6 1,12.5 Z" fill="url(#bg16_525)" stroke="#3a3a3a" stroke-width="1.2"/></svg>
<div class="ft" style="left:45.88px;top:519.69px;font-size:11px;line-height:11px;font-weight:normal;color:#333;transform:scaleX(0.9554);">Right Wing Tip</div>
<div class="row" style="left:0;top:539.5px;width:98.6px"></div>
<svg class="abs" style="left:-10px;top:542px" width="20" height="14"><path d="M3,6 C6,2 13,2 16.5,6.5" fill="none" stroke="#a6a6a6" stroke-width="1.3"/><path d="M6,7.5 C8,5 12,5 14,7.5" fill="none" stroke="#a6a6a6" stroke-width="1.1"/><line x1="8" y1="6.5" x2="14.5" y2="12.5" stroke="#a6a6a6" stroke-width="1.2"/></svg>
<svg class="abs" style="left:16px;top:540.5px" width="17" height="17"><defs><linearGradient id="bg16_549" x1="0" y1="0" x2="1" y2="1"><stop offset="0" stop-color="#ffffff"/><stop offset="0.55" stop-color="#d4d4d6"/><stop offset="1" stop-color="#f4f4f6"/></linearGradient></defs><path d="M1,3.5 Q1,0.7 8,0.7 Q15,0.7 15,3.5 L15,12.5 Q15,15.6 8,15.6 Q1,15.6 1,12.5 Z" fill="url(#bg16_549)" stroke="#3a3a3a" stroke-width="1.2"/></svg>
<div class="ft" style="left:45.87px;top:543.69px;font-size:11px;line-height:11px;font-weight:normal;color:#333;transform:scaleX(0.9849);">Left Flap</div>
<div class="row" style="left:0;top:563.5px;width:110px"></div>
<svg class="abs" style="left:-10px;top:566px" width="20" height="14"><path d="M3,6 C6,2 13,2 16.5,6.5" fill="none" stroke="#a6a6a6" stroke-width="1.3"/><path d="M6,7.5 C8,5 12,5 14,7.5" fill="none" stroke="#a6a6a6" stroke-width="1.1"/><line x1="8" y1="6.5" x2="14.5" y2="12.5" stroke="#a6a6a6" stroke-width="1.2"/></svg>
<svg class="abs" style="left:16px;top:564.5px" width="17" height="17"><defs><linearGradient id="bg16_573" x1="0" y1="0" x2="1" y2="1"><stop offset="0" stop-color="#ffffff"/><stop offset="0.55" stop-color="#d4d4d6"/><stop offset="1" stop-color="#f4f4f6"/></linearGradient></defs><path d="M1,3.5 Q1,0.7 8,0.7 Q15,0.7 15,3.5 L15,12.5 Q15,15.6 8,15.6 Q1,15.6 1,12.5 Z" fill="url(#bg16_573)" stroke="#3a3a3a" stroke-width="1.2"/></svg>
<div class="ft" style="left:45.86px;top:567.69px;font-size:11px;line-height:11px;font-weight:normal;color:#333;transform:scaleX(0.9988);">Left Aileron</div>
<div class="row" style="left:0;top:587.5px;width:102.6px"></div>
<svg class="abs" style="left:-10px;top:590px" width="20" height="14"><path d="M3,6 C6,2 13,2 16.5,6.5" fill="none" stroke="#a6a6a6" stroke-width="1.3"/><path d="M6,7.5 C8,5 12,5 14,7.5" fill="none" stroke="#a6a6a6" stroke-width="1.1"/><line x1="8" y1="6.5" x2="14.5" y2="12.5" stroke="#a6a6a6" stroke-width="1.2"/></svg>
<svg class="abs" style="left:16px;top:588.5px" width="17" height="17"><defs><linearGradient id="bg16_597" x1="0" y1="0" x2="1" y2="1"><stop offset="0" stop-color="#ffffff"/><stop offset="0.55" stop-color="#d4d4d6"/><stop offset="1" stop-color="#f4f4f6"/></linearGradient></defs><path d="M1,3.5 Q1,0.7 8,0.7 Q15,0.7 15,3.5 L15,12.5 Q15,15.6 8,15.6 Q1,15.6 1,12.5 Z" fill="url(#bg16_597)" stroke="#3a3a3a" stroke-width="1.2"/></svg>
<div class="ft" style="left:45.89px;top:591.69px;font-size:11px;line-height:11px;font-weight:normal;color:#333;transform:scaleX(0.9379);">Right Flap</div>
<div class="row" style="left:0;top:611.5px;width:118.7px"></div>
<svg class="abs" style="left:-10px;top:614px" width="20" height="14"><path d="M3,6 C6,2 13,2 16.5,6.5" fill="none" stroke="#a6a6a6" stroke-width="1.3"/><path d="M6,7.5 C8,5 12,5 14,7.5" fill="none" stroke="#a6a6a6" stroke-width="1.1"/><line x1="8" y1="6.5" x2="14.5" y2="12.5" stroke="#a6a6a6" stroke-width="1.2"/></svg>
<svg class="abs" style="left:16px;top:612.5px" width="17" height="17"><defs><linearGradient id="bg16_621" x1="0" y1="0" x2="1" y2="1"><stop offset="0" stop-color="#ffffff"/><stop offset="0.55" stop-color="#d4d4d6"/><stop offset="1" stop-color="#f4f4f6"/></linearGradient></defs><path d="M1,3.5 Q1,0.7 8,0.7 Q15,0.7 15,3.5 L15,12.5 Q15,15.6 8,15.6 Q1,15.6 1,12.5 Z" fill="url(#bg16_621)" stroke="#3a3a3a" stroke-width="1.2"/></svg>
<div class="ft" style="left:45.88px;top:615.69px;font-size:11px;line-height:11px;font-weight:normal;color:#333;transform:scaleX(0.9594);">Right Aileron</div>
<svg class="abs" style="left:13px;top:312.5px" width="93" height="6"><defs><pattern id="dp315.5" width="6.1" height="6" patternUnits="userSpaceOnUse"><path d="M0,5.5 L3.6,1.6" stroke="#7a8089" stroke-width="2"/></pattern></defs><rect x="0" y="0" width="93" height="6" fill="url(#dp315.5)"/></svg>
<div class="row" style="left:0;top:635.5px;width:132.7px"></div>
<svg class="abs" style="left:0px;top:638px" width="16" height="14"><path d="M0,1 L5,1 L6.5,3 L14,3 L14,13 L0,13 Z" fill="#8c8c8c"/><rect x="0" y="4.5" width="14" height="8.5" fill="#9a9a9a"/></svg>
<div class="ft" style="left:28.07px;top:639.69px;font-size:11px;line-height:11px;font-weight:normal;color:#333;transform:scaleX(0.9840);">Horizontal Stab (16)</div>
<div class="row" style="left:0;top:659.5px;width:100.9px"></div>
<svg class="abs" style="left:0px;top:662px" width="16" height="14"><path d="M0,1 L5,1 L6.5,3 L14,3 L14,13 L0,13 Z" fill="#8c8c8c"/><rect x="0" y="4.5" width="14" height="8.5" fill="#9a9a9a"/></svg>
<div class="ft" style="left:28.06px;top:663.69px;font-size:11px;line-height:11px;font-weight:normal;color:#333;transform:scaleX(0.9887);">Elevator (18)</div>
<div class="row" style="left:0;top:683.5px;width:116.6px"></div>
<svg class="abs" style="left:0px;top:686px" width="16" height="14"><path d="M0,1 L5,1 L6.5,3 L14,3 L14,13 L0,13 Z" fill="#8c8c8c"/><rect x="0" y="4.5" width="14" height="8.5" fill="#9a9a9a"/></svg>
<div class="ft" style="left:28.06px;top:687.69px;font-size:11px;line-height:11px;font-weight:normal;color:#333;transform:scaleX(1.0015);">Vertical Stab (7)</div>
<div class="row" style="left:0;top:707.5px;width:88.1px"></div>
<svg class="abs" style="left:0px;top:710px" width="16" height="14"><path d="M0,1 L5,1 L6.5,3 L14,3 L14,13 L0,13 Z" fill="#8c8c8c"/><rect x="0" y="4.5" width="14" height="8.5" fill="#9a9a9a"/></svg>
<div class="ft" style="left:28.06px;top:711.69px;font-size:11px;line-height:11px;font-weight:normal;color:#333;transform:scaleX(0.9962);">Rudder (7)</div>
<div class="row" style="left:0;top:731.5px;width:60.7px"></div>
<svg class="abs" style="left:0px;top:734px" width="16" height="14"><path d="M0,1 L5,1 L6.5,3 L14,3 L14,13 L0,13 Z" fill="#8c8c8c"/><rect x="0" y="4.5" width="14" height="8.5" fill="#9a9a9a"/></svg>
<div class="ft" style="left:28.07px;top:735.69px;font-size:11px;line-height:11px;font-weight:normal;color:#333;transform:scaleX(0.9878);">Fuse</div>
<div class="row" style="left:0;top:755.5px;width:64.6px"></div>
<svg class="abs" style="left:0px;top:758px" width="16" height="14"><path d="M0,1 L5,1 L6.5,3 L14,3 L14,13 L0,13 Z" fill="#8c8c8c"/><rect x="0" y="4.5" width="14" height="8.5" fill="#9a9a9a"/></svg>
<div class="ft" style="left:28.08px;top:759.69px;font-size:11px;line-height:11px;font-weight:normal;color:#333;transform:scaleX(0.9635);">Wing</div>
<div class="row" style="left:0;top:779.5px;width:77px"></div>
<svg class="abs" style="left:-2px;top:780.5px" width="17" height="17"><defs><linearGradient id="bg-2_789" x1="0" y1="0" x2="1" y2="1"><stop offset="0" stop-color="#ffffff"/><stop offset="0.55" stop-color="#d4d4d6"/><stop offset="1" stop-color="#f4f4f6"/></linearGradient></defs><path d="M1,3.5 Q1,0.7 8,0.7 Q15,0.7 15,3.5 L15,12.5 Q15,15.6 8,15.6 Q1,15.6 1,12.5 Z" fill="url(#bg-2_789)" stroke="#3a3a3a" stroke-width="1.2"/></svg>
<div class="ft" style="left:28.05px;top:783.69px;font-size:11px;line-height:11px;font-weight:normal;color:#333;transform:scaleX(1.0209);">Firewall</div>
<div class="row" style="left:0;top:803.5px;width:70.8px"></div>
<div class="ft" style="left:9.76px;top:807.69px;font-size:11px;line-height:11px;font-weight:normal;color:#333;transform:scaleX(1.0012);">Canvases</div>
<div class="row" style="left:0;top:827.5px;width:67px"></div>
<div class="ft" style="left:9.76px;top:831.69px;font-size:11px;line-height:11px;font-weight:normal;color:#333;transform:scaleX(0.9984);">Sketches</div>
<div class="row" style="left:0;top:851.5px;width:82.5px"></div>
<div class="ft" style="left:9.76px;top:855.69px;font-size:11px;line-height:11px;font-weight:normal;color:#333;transform:scaleX(0.9904);">Construction</div>
<div class="abs" style="left:-1px;top:938px;width:199px;height:25px;background:#f0f0f0;border:1px solid #c8c8c8;border-top-color:#e2e2e2"></div>
<svg class="abs" style="left:170px;top:941px" width="30" height="20">
<circle cx="11" cy="9" r="4.6" fill="#222"/><rect x="8" y="8.2" width="6" height="1.6" fill="#fff"/><rect x="10.2" y="6" width="1.6" height="6" fill="#fff"/>
<line x1="23.5" y1="4" x2="23.5" y2="14" stroke="#555" stroke-width="0.8"/><line x1="25.5" y1="4" x2="25.5" y2="14" stroke="#555" stroke-width="0.8"/>
</svg>
<div class="abs" style="left:0;top:967px;width:1817px;height:7px;background:#f0f0f0;border-top:1px solid #dcdcdc"></div>
<div class="abs" style="left:1306px;top:245px;width:250px;height:423px;background:#f1f1f1;border:1px solid #c6c6c6"></div>
<div class="abs" style="left:1306px;top:245px;width:250px;height:25px;border-bottom:1px solid #c9c9c9"></div><svg class="abs" style="left:1306px;top:246px" width="250" height="22"><line x1="2.5" y1="7" x2="2.5" y2="16" stroke="#444" stroke-width="0.8"/><line x1="4.5" y1="7" x2="4.5" y2="16" stroke="#444" stroke-width="0.8"/><circle cx="16.5" cy="11.3" r="4.6" fill="#222"/><rect x="13.5" y="10.5" width="6" height="1.6" fill="#fff"/><polygon points="235,7.5 239.5,11 235,14.5" fill="#111"/><polygon points="239.5,7.5 244,11 239.5,14.5" fill="#111"/></svg><div class="ft" style="left:1330.81px;top:251.69px;font-size:11px;line-height:11px;font-weight:normal;color:#5a5a5a;transform:scaleX(0.8969);">SKETCH PALETTE</div>
<svg class="abs" style="left:1315px;top:280px" width="12" height="10"><polygon points="1,1 10,1 5.5,8" fill="#222"/></svg>
<div class="ft" style="left:1330.74px;top:280.27px;font-size:11.5px;line-height:11.5px;font-weight:bold;color:#333;transform:scaleX(0.9922);">Options</div>
<div class="ft" style="left:1318.96px;top:309.89px;font-size:11px;line-height:11px;font-weight:normal;color:#333;transform:scaleX(0.9972);">Linetype</div>
<div class="ft" style="left:1318.96px;top:339.89px;font-size:11px;line-height:11px;font-weight:normal;color:#333;transform:scaleX(1.0049);">Look At</div>
<div class="ft" style="left:1318.97px;top:369.89px;font-size:11px;line-height:11px;font-weight:normal;color:#333;transform:scaleX(0.9772);">Sketch Grid</div>
<div class="cb" style="left:1472px;top:368px"></div>
<svg class="abs" style="left:1472px;top:368px" width="13" height="13"><path d="M3,6.5 L5.5,9.5 L10,2.5" fill="none" stroke="#111" stroke-width="1.5"/></svg>
<div class="ft" style="left:1318.96px;top:399.89px;font-size:11px;line-height:11px;font-weight:normal;color:#333;transform:scaleX(0.9991);">Snap</div>
<div class="cb" style="left:1472px;top:398px"></div>
<div class="ft" style="left:1318.97px;top:429.89px;font-size:11px;line-height:11px;font-weight:normal;color:#333;transform:scaleX(0.9842);">Slice</div>
<div class="cb" style="left:1472px;top:428px"></div>
<div class="ft" style="left:1318.95px;top:459.89px;font-size:11px;line-height:11px;font-weight:normal;color:#333;transform:scaleX(1.0150);">Show Profile</div>
<div class="cb" style="left:1472px;top:458px"></div>
<svg class="abs" style="left:1472px;top:458px" width="13" height="13"><path d="M3,6.5 L5.5,9.5 L10,2.5" fill="none" stroke="#111" stroke-width="1.5"/></svg>
<div class="ft" style="left:1318.96px;top:489.89px;font-size:11px;line-height:11px;font-weight:normal;color:#333;transform:scaleX(1.0037);">Show Points</div>
<div class="cb" style="left:1472px;top:488px"></div>
<svg class="abs" style="left:1472px;top:488px" width="13" height="13"><path d="M3,6.5 L5.5,9.5 L10,2.5" fill="none" stroke="#111" stroke-width="1.5"/></svg>
<div class="ft" style="left:1318.96px;top:519.89px;font-size:11px;line-height:11px;font-weight:normal;color:#333;transform:scaleX(0.9935);">Show Dimensions</div>
<div class="cb" style="left:1472px;top:518px"></div>
<svg class="abs" style="left:1472px;top:518px" width="13" height="13"><path d="M3,6.5 L5.5,9.5 L10,2.5" fill="none" stroke="#111" stroke-width="1.5"/></svg>
<div class="ft" style="left:1318.95px;top:549.89px;font-size:11px;line-height:11px;font-weight:normal;color:#333;transform:scaleX(1.0148);">Show Constraints</div>
<div class="cb" style="left:1472px;top:548px"></div>
<svg class="abs" style="left:1472px;top:548px" width="13" height="13"><path d="M3,6.5 L5.5,9.5 L10,2.5" fill="none" stroke="#111" stroke-width="1.5"/></svg>
<div class="ft" style="left:1318.97px;top:579.89px;font-size:11px;line-height:11px;font-weight:normal;color:#333;transform:scaleX(0.9855);">Show Projected Geometries</div>
<div class="cb" style="left:1472px;top:578px"></div>
<svg class="abs" style="left:1472px;top:578px" width="13" height="13"><path d="M3,6.5 L5.5,9.5 L10,2.5" fill="none" stroke="#111" stroke-width="1.5"/></svg>
<div class="ft" style="left:1318.97px;top:609.89px;font-size:11px;line-height:11px;font-weight:normal;color:#333;transform:scaleX(0.9685);">3D Sketch</div>
<div class="cb" style="left:1472px;top:608px"></div>
<svg class="abs" style="left:1460px;top:300px" width="65" height="60">
<line x1="14.2" y1="13.6" x2="25.9" y2="7.4" stroke="#4a5a5a" stroke-width="1.1"/>
<line x1="14.2" y1="17" x2="25.9" y2="22.4" stroke="#4a5a5a" stroke-width="1.1"/>
<line x1="10.5" y1="15.3" x2="27" y2="15.3" stroke="#e07a40" stroke-width="1.1" stroke-dasharray="2.2,1.6"/>
<line x1="24.5" y1="13" x2="24.5" y2="18" stroke="#e07a40" stroke-width="1"/>
<path d="M22.5,7 L25.5,9 M22.5,23 L25.5,21" stroke="#e07a40" stroke-width="0.8"/>
<path d="M50.8,7.4 L43,7.4 Q41.3,7.4 41.3,9.2 L41.3,19.8 Q41.3,21.6 43,21.6 L50.8,21.6 L50.8,19.8 L54.9,19.8 L54.9,9.3 L50.8,9.3 Z" fill="none" stroke="#555" stroke-width="1.1"/>
<line x1="40" y1="14.5" x2="56" y2="14.5" stroke="#e07a40" stroke-width="1" stroke-dasharray="2.4,1.6"/>
<path d="M12,42.2 L16,37.5 L17,41 L22.5,39 L23.5,42.2 Z" fill="#666" stroke="#444" stroke-width="0.6"/>
<rect x="11.4" y="42.2" width="15.4" height="10.5" rx="1" fill="#f8f8f8" stroke="#333" stroke-width="1.1"/>
<rect x="14.5" y="45.3" width="9.3" height="4.3" fill="#a4a8ac" stroke="#333" stroke-width="0.8"/>
</svg>
<div class="abs" style="left:1306px;top:631px;width:250px;height:1px;background:#c9c9c9"></div>
<div class="abs" style="left:1462px;top:640px;width:82px;height:20px;background:#ececec;border:1px solid #bdbdbd"></div>
<div class="ft" style="left:1465.81px;top:644.42px;font-size:12.5px;line-height:12.5px;font-weight:normal;color:#555;transform:scaleX(0.9861);">Finish Sketch</div>
<div class="abs" style="left:1560px;top:245px;width:250px;height:153px;background:#f1f1f1;border:1px solid #c6c6c6"></div>
<div class="abs" style="left:1560px;top:245px;width:250px;height:25px;border-bottom:1px solid #c9c9c9"></div><svg class="abs" style="left:1560px;top:246px" width="250" height="22"><line x1="2.5" y1="7" x2="2.5" y2="16" stroke="#444" stroke-width="0.8"/><line x1="4.5" y1="7" x2="4.5" y2="16" stroke="#444" stroke-width="0.8"/><circle cx="16.5" cy="11.3" r="4.6" fill="#222"/><rect x="13.5" y="10.5" width="6" height="1.6" fill="#fff"/><polygon points="235,7.5 239.5,11 235,14.5" fill="#111"/><polygon points="239.5,7.5 244,11 239.5,14.5" fill="#111"/></svg><div class="ft" style="left:1584.81px;top:251.69px;font-size:11px;line-height:11px;font-weight:normal;color:#5a5a5a;transform:scaleX(0.8798);">PROJECT</div>
<div class="ft" style="left:1572.87px;top:280.09px;font-size:11px;line-height:11px;font-weight:normal;color:#333;transform:scaleX(0.9807);">Geometry</div>
<div class="ft" style="left:1572.88px;top:310.09px;font-size:11px;line-height:11px;font-weight:normal;color:#333;transform:scaleX(0.9612);">Selection Filter</div>
<div class="ft" style="left:1572.87px;top:340.09px;font-size:11px;line-height:11px;font-weight:normal;color:#333;transform:scaleX(0.9695);">Projection Link</div>
<div class="abs" style="left:1656.5px;top:271.5px;width:78px;height:26px;background:#0a96d8"></div>
<svg class="abs" style="left:1662px;top:276px" width="14" height="18"><path d="M2,2 L2,14 L5,11 L7.5,16 L9.5,15 L7,10 L11,10 Z" fill="#fff" stroke="#cde" stroke-width="0.5"/></svg>
<div class="ft" style="left:1677.76px;top:280.27px;font-size:11.5px;line-height:11.5px;font-weight:normal;color:#fff;transform:scaleX(0.9628);">2 selected</div>
<svg class="abs" style="left:1744px;top:279px" width="12" height="12"><path d="M2,2 L10,10 M10,2 L2,10" stroke="#444" stroke-width="1.8"/></svg>
<div class="abs" style="left:1656.5px;top:302px;width:23px;height:26px;background:#0a96d8"></div>
<svg class="abs" style="left:1658px;top:305px" width="22" height="20">
<rect x="3.5" y="4.5" width="11" height="10" fill="#c9a6e8" stroke="#fff" stroke-width="1" stroke-dasharray="2,1"/>
<path d="M10,8 L10,18 L12.5,15.5 L14.5,19.5 L16,18.8 L14,14.8 L17.5,14.8 Z" fill="#fff" stroke="#222" stroke-width="0.8"/>
</svg>
<svg class="abs" style="left:1689px;top:307.0px" width="17" height="17"><defs><linearGradient id="bg1689_315.5" x1="0" y1="0" x2="1" y2="1"><stop offset="0" stop-color="#ffffff"/><stop offset="0.55" stop-color="#d4d4d6"/><stop offset="1" stop-color="#f4f4f6"/></linearGradient></defs><path d="M1,3.5 Q1,0.7 8,0.7 Q15,0.7 15,3.5 L15,12.5 Q15,15.6 8,15.6 Q1,15.6 1,12.5 Z" fill="url(#bg1689_315.5)" stroke="#3a3a3a" stroke-width="1.2"/></svg>
<div class="cb" style="left:1661px;top:338.5px"></div>
<svg class="abs" style="left:1661px;top:338.5px" width="13" height="13"><path d="M3,6.5 L5.5,9.5 L10,2.5" fill="none" stroke="#111" stroke-width="1.5"/></svg>
<div class="abs" style="left:1560px;top:361px;width:250px;height:1px;background:#c9c9c9"></div>
<svg class="abs" style="left:1568px;top:373px" width="14" height="14"><circle cx="7" cy="7" r="6" fill="#111"/><rect x="6" y="5.8" width="2" height="5" fill="#fff"/><circle cx="7" cy="3.8" r="1.1" fill="#fff"/></svg>
<div class="abs" style="left:1668px;top:370.5px;width:60px;height:18px;background:#e6e6e6;border:1px solid #bdbdbd"></div>
<div class="ft" style="left:1689.23px;top:373.54px;font-size:12px;line-height:12px;font-weight:normal;color:#666;transform:scaleX(0.9827);">OK</div>
<div class="abs" style="left:1738px;top:370.5px;width:60px;height:18px;background:#ececec;border:1px solid #bdbdbd"></div>
<div class="ft" style="left:1748.00px;top:373.54px;font-size:12px;line-height:12px;font-weight:normal;color:#555;transform:scaleX(1.0467);">Cancel</div>
<svg class="abs" style="left:1700px;top:130px" width="90" height="95">
<rect x="24.5" y="28" width="52" height="53" fill="rgba(190,190,190,0.72)" stroke="#999" stroke-width="0.8"/>
<rect x="35" y="37" width="32" height="40" fill="rgba(150,150,150,0.12)"/>
<text x="26" y="59" font-family="Liberation Sans" font-weight="bold" font-size="12.5" fill="#7d7d7d" textLength="49" lengthAdjust="spacingAndGlyphs">BOTTOM</text>
<line x1="16" y1="81.5" x2="78" y2="81.5" stroke="#e46b6b" stroke-width="2"/>
<line x1="77.5" y1="20" x2="77.5" y2="82" stroke="#6edc6e" stroke-width="2"/>
<text x="4" y="86" font-family="Liberation Sans" font-size="11" fill="#f07a7a">X</text>
<text x="73" y="16" font-family="Liberation Sans" font-size="11" fill="#8ee08e">Y</text>
</svg>
<div class="abs" style="left:735px;top:939px;width:236px;height:24px;background:rgba(244,245,247,0.97)"></div>
<svg class="abs" style="left:730px;top:935px" width="250" height="32">
<path d="M15,9 C12,9 11.5,13 11.5,17 C11.5,21 12,25 15,25" fill="none" stroke="#333" stroke-width="1.1"/>
<path d="M15,9 C17,9 18,11 18,12.5 M18,21 C18,23 17,25 15,25" fill="none" stroke="#333" stroke-width="1.1"/>
<path d="M10,13 C8,14 8,17 10,18 M20,13.5 C23,13 24,16 23,18 C22,19.5 19,19.5 14,19.5" fill="none" stroke="#333" stroke-width="1"/>
<path d="M15,13 L15,17 M13,15 L17,15 M20,11.5 L20,14.5 M18.5,13 L21.5,13" stroke="#333" stroke-width="0.9"/>
<polygon points="29,14 35,14 32,17.5" fill="#333"/>
<path d="M42,14 L46,9 L47,12.5 L53,10 L53.5,14 Z" fill="#777" stroke="#333" stroke-width="0.7"/>
<rect x="41.5" y="14" width="15" height="10" fill="#fafafa" stroke="#333" stroke-width="1.1"/>
<rect x="44.5" y="16.8" width="9" height="4.2" fill="#a9acb0" stroke="#333" stroke-width="0.8"/>
<path d="M71,22.5 C69,20 67,18 68,17 C69,16 70.5,17 71.5,18.5 L71,11 C71,9.8 73,9.8 73,11 L73.5,16 L73.5,9.5 C73.5,8.3 75.5,8.3 75.5,9.5 L76,15.5 L76.5,10 C76.5,8.8 78.5,8.8 78.5,10 L78.5,16 L79.5,12.5 C80,11.3 81.8,11.8 81.5,13 L80,20 C79,23.5 77,25 74.5,25 C73,25 72,24 71,22.5 Z" fill="#fff" stroke="#222" stroke-width="1"/>
<circle cx="97.5" cy="15" r="4.6" fill="#dfeaea" stroke="#222" stroke-width="1.2"/>
<line x1="100.8" y1="18.3" x2="104.5" y2="22" stroke="#222" stroke-width="2.2" stroke-linecap="round"/>
<path d="M104,10.5 L108.5,10.5 M106.25,8.2 L106.25,12.8 M104,14.2 L108.5,14.2" stroke="#222" stroke-width="0.9"/>
<rect x="119" y="7.8" width="16" height="15.3" fill="none" stroke="#333" stroke-width="0.9" stroke-dasharray="2,1.6"/>
<circle cx="125.8" cy="14.3" r="5.6" fill="#dfeaea" stroke="#222" stroke-width="1.3"/>
<line x1="129.8" y1="18.3" x2="134" y2="22.5" stroke="#222" stroke-width="2.4" stroke-linecap="round"/>
<polygon points="140.4,14 145.8,14 143.1,17.4" fill="#222"/>
<rect x="152.5" y="8.3" width="15.3" height="12.5" rx="1.5" fill="#f4f4f4" stroke="#333" stroke-width="1"/>
<rect x="154.5" y="10.3" width="11.3" height="8.5" fill="#a8c6ea" stroke="#333" stroke-width="0.8"/>
<path d="M157.5,20.8 L156.5,23 L164,23 L163,20.8" fill="#f4f4f4" stroke="#333" stroke-width="0.9"/>
<polygon points="170.5,14 175.8,14 173.1,17.4" fill="#222"/>
<rect x="183.5" y="8" width="15" height="15.5" rx="1" fill="#5a5a5a"/>
<path d="M185.5,10 h2.2v2.2h-2.2z M189.3,10 h2.2v2.2h-2.2z M193.1,10 h2.2v2.2h-2.2z M185.5,13.8 h2.2v2.2h-2.2z M189.3,13.8 h2.2v2.2h-2.2z M193.1,13.8 h2.2v2.2h-2.2z M185.5,17.6 h2.2v2.2h-2.2z M189.3,17.6 h2.2v2.2h-2.2z M193.1,17.6 h2.2v2.2h-2.2z M185.5,21 h2.2v1.5h-2.2z M189.3,21 h2.2v1.5h-2.2z M193.1,21 h2.2v1.5h-2.2z M196.3,10 h1.5v2.2h-1.5z M196.3,13.8 h1.5v2.2h-1.5z M196.3,17.6 h1.5v2.2h-1.5z" fill="#f0f0f0"/>
<polygon points="201.3,14 206.5,14 203.9,17.4" fill="#222"/>
<rect x="214" y="8.5" width="14.6" height="13.5" rx="1.5" fill="#34527a"/>
<rect x="215.5" y="10" width="5.3" height="4.7" fill="#b3cdee"/><rect x="222" y="10" width="5.3" height="4.7" fill="#b3cdee"/>
<rect x="215.5" y="16" width="5.3" height="4.7" fill="#b3cdee"/><rect x="222" y="16" width="5.3" height="4.7" fill="#b3cdee"/>
<polygon points="232.5,14 237.5,14 235,17.4" fill="#222"/>
</svg>
<div class="ft" style="left:1609.85px;top:945.69px;font-size:11px;line-height:11px;font-weight:bold;color:#333;transform:scaleX(1.0118);">1 Face 1 Edge | Angle : 0.0 deg</div>
<svg class="abs" style="left:1785px;top:943px" width="16" height="16"><circle cx="8" cy="8" r="7" fill="#111"/><path d="M4,11 C5,6 9,4 12,6 L12,9 C10,7 7,8 6,11 Z" fill="#fff"/></svg>
</body></html>
